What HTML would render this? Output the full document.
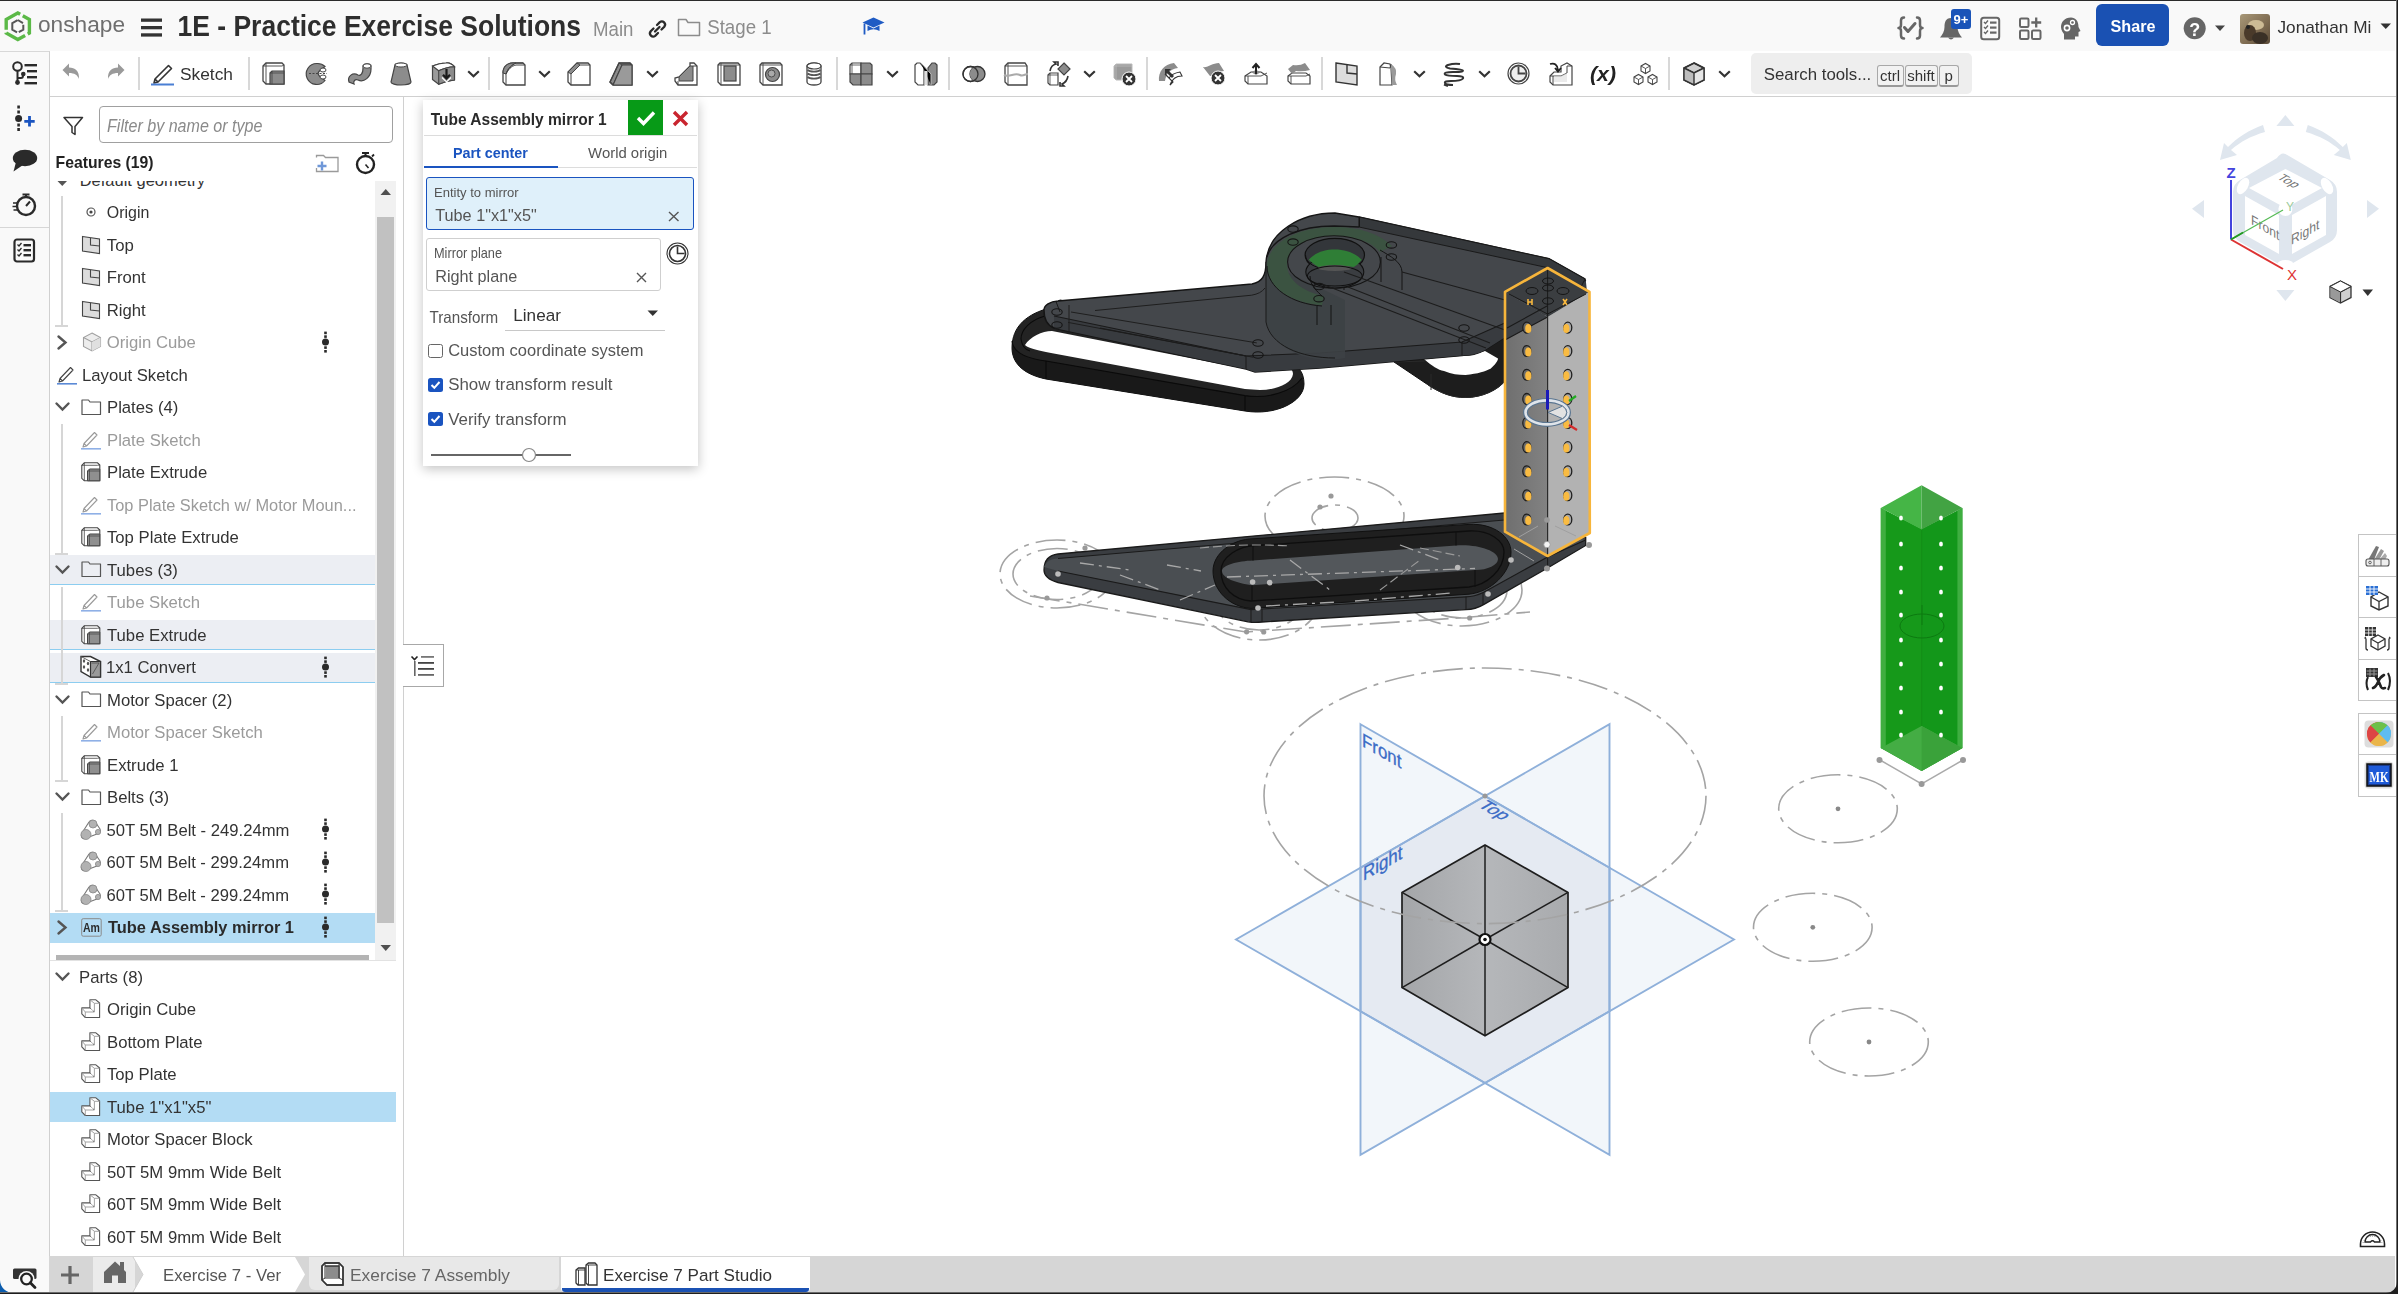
<!DOCTYPE html>
<html><head><meta charset="utf-8"><style>
*{margin:0;padding:0;box-sizing:border-box}
html,body{width:2398px;height:1294px;overflow:hidden;background:#fff;font-family:"Liberation Sans",sans-serif;color:#333}
.a{position:absolute}
.t{position:absolute;white-space:nowrap;line-height:1}
svg{position:absolute;overflow:visible}
#frameTop{left:0;top:0;width:2398px;height:1px;background:#2b2b2b}
#frameR{left:2396px;top:0;width:2px;height:1294px;background:linear-gradient(90deg,#707070 0,#707070 1px,#1e1e1e 1px)}
#frameB{left:0;top:1292px;width:2398px;height:2px;background:linear-gradient(180deg,#6a6a6a 0,#6a6a6a 1px,#1e1e1e 1px)}
#topbar{left:0;top:1px;width:2395px;height:50px;background:#f9f9f9}
#rail{left:0;top:51px;width:50px;height:1241px;background:#f9f9f9;border-right:1px solid #cfcfcf;border-top:1px solid #d8d8d8}
#toolbar{left:49px;top:51px;width:2346px;height:46px;background:#fff;border-bottom:1px solid #cfcfcf}
.sep{position:absolute;top:58px;width:2px;height:32px;background:#d6d6d6}
#fpanel{left:49px;top:96px;width:355px;height:1160px;background:#fff;border-right:1px solid #cfcfcf;border-top:1px solid #cfcfcf}
.lbl{position:absolute;font-size:16.5px;color:#333;white-space:nowrap;line-height:1}
.dim{color:#9b9b9b}
#bottombar{left:49px;top:1256px;width:2346px;height:36px;background:#d6d6d6}

</style></head><body>
<div class="a" style="left:0px;top:1px;width:2395px;height:50px;background:#f9f9f9"></div>
<div class="a" style="left:50px;top:51px;width:2346px;height:46px;background:#fff;border-bottom:1px solid #d0d0d0"></div>
<div class="a" style="left:0px;top:51px;width:50px;height:1241px;background:#f9f9f9;border-right:1px solid #d0d0d0;border-top:1px solid #d8d8d8"></div>
<div class="a" style="left:0px;top:227px;width:49px;height:1px;background:#d6d6d6"></div>
<svg style="left:0px;top:10px" width="36" height="34" viewBox="0 0 36 34">
<path d="M6.2 19.5 L17.8 13 L29.4 19.5 L29.4 33 L17.8 39.5 L6.2 33 Z" fill="none" stroke="#5bb947" stroke-width="3.4" stroke-dasharray="16 3 23 3 22 3 10 0" stroke-linejoin="miter" transform="translate(0,-10)"/>
<path d="M17.8 20 L23.3 23.2 L23.3 29.6 L17.8 32.8 L12.3 29.6 L12.3 23.2 Z" fill="none" stroke="#565656" stroke-width="2" stroke-dasharray="6 2 10 2 12 0" transform="translate(0,-10)"/>
</svg>
<svg style="left:141px;top:18px" width="22" height="20" viewBox="0 0 22 20"><rect x="0" y="0.5" width="21" height="3.3" fill="#333"/><rect x="0" y="8" width="21" height="3.3" fill="#333"/><rect x="0" y="15.3" width="21" height="3.3" fill="#333"/></svg>
<svg style="left:647px;top:19px" width="21" height="20" viewBox="0 0 21 20"><g fill="none" stroke="#2a2a2a" stroke-width="2.3" stroke-linecap="round"><path d="M8 12.5 L12.5 8"/><path d="M10 6 L12.8 3.2 a3.2 3.2 0 0 1 4.5 4.5 L14.5 10.5"/><path d="M6.5 9.5 L3.7 12.3 a3.2 3.2 0 0 0 4.5 4.5 L11 14"/></g></svg>
<svg style="left:677px;top:18px" width="25" height="20" viewBox="0 0 25 20"><path d="M1.5 1.5 L9 1.5 L11 4.5 L22.5 4.5 L22.5 17.5 L1.5 17.5 Z" fill="none" stroke="#8c8c8c" stroke-width="1.5" stroke-linejoin="round"/></svg>
<svg style="left:862px;top:16px" width="23" height="21" viewBox="0 0 23 21"><path d="M0.5 6.5 L11.5 1.5 L22.5 6.5 L11.5 11.5 Z" fill="#1f5bc4"/><path d="M5.5 9.5 L5.5 15 Q11.5 11.5 17.5 15 L17.5 9.5 L11.5 12.5 Z" fill="#1f5bc4"/><path d="M2.5 7.5 L2.5 18.5" stroke="#1f5bc4" stroke-width="1.8"/></svg>
<svg style="left:1897px;top:16px" width="27" height="25" viewBox="0 0 27 25"><g fill="none" stroke="#666" stroke-width="2.5" stroke-linecap="round" stroke-linejoin="round"><path d="M7 1.5 Q4 1.5 4 4.5 L4 9 Q4 12 1.5 12 Q4 12 4 15 L4 19.5 Q4 22.5 7 22.5"/><path d="M20 1.5 Q23 1.5 23 4.5 L23 9 Q23 12 25.5 12 Q23 12 23 15 L23 19.5 Q23 22.5 20 22.5"/><path d="M7.5 11.5 L11 15.5 L18 7.5" stroke-width="3"/></g></svg>
<svg style="left:1939px;top:16px" width="24" height="25" viewBox="0 0 24 25"><path d="M12 2 C6.5 2 5.5 6.5 5.5 11 C5.5 15.5 3.5 18.5 1 21.5 L23 21.5 C20.5 18.5 18.5 15.5 18.5 11 C18.5 6.5 17.5 2 12 2 Z" fill="#666"/><path d="M9 21.5 Q12 25.5 15 21.5 Z" fill="#666"/></svg>
<div class="a" style="left:1951px;top:9px;width:20px;height:20px;background:#1a54b8;border-radius:3px"></div>
<svg style="left:1980px;top:16px" width="22" height="25" viewBox="0 0 22 25"><rect x="1.2" y="1.8" width="18" height="21.5" rx="2.5" fill="none" stroke="#666" stroke-width="2"/><g fill="none" stroke="#666" stroke-width="1.4"><path d="M4 6 L5.5 7.5 L8 4.5"/><path d="M4 11 L5.5 12.5 L8 9.5"/><path d="M4 16 L5.5 17.5 L8 14.5"/></g><g fill="#666"><rect x="10" y="5.5" width="6.5" height="2.2"/><rect x="10" y="10.5" width="6.5" height="2.2"/><rect x="10" y="15.5" width="6.5" height="2.2"/></g></svg>
<svg style="left:2018px;top:16px" width="26" height="25" viewBox="0 0 26 25"><g fill="none" stroke="#666" stroke-width="2"><rect x="2" y="2.5" width="8.5" height="8.5" rx="1.2"/><rect x="2" y="14.5" width="8.5" height="8.5" rx="1.2"/><rect x="14" y="14.5" width="8.5" height="8.5" rx="1.2"/><path d="M18.2 1.5 L18.2 11.5 M13.3 6.5 L23.2 6.5" stroke-width="2.3"/></g></svg>
<svg style="left:2060px;top:16px" width="22" height="25" viewBox="0 0 22 25"><path d="M11 1.5 C4.5 1.5 1 6 1 11 C1 14.5 3 16.5 4 18 L4 23.5 L15 23.5 L15 20.5 L18.5 20.5 L18.5 16 L20.5 15 L18.5 11 C18.5 5 15.5 1.5 11 1.5 Z" fill="#666"/><circle cx="7" cy="12" r="2.6" fill="none" stroke="#fff" stroke-width="1.6"/><circle cx="12.5" cy="6.5" r="2" fill="none" stroke="#fff" stroke-width="1.3"/></svg>
<div class="a" style="left:2096px;top:4px;width:73px;height:42px;background:#1a51b3;border-radius:6px"></div>
<svg style="left:2183px;top:17px" width="44" height="23" viewBox="0 0 44 23"><circle cx="11.7" cy="11.3" r="11" fill="#666"/><path d="M32 8.5 L42 8.5 L37 14 Z" fill="#444"/></svg>
<svg style="left:2240px;top:14px" width="30" height="30" viewBox="0 0 30 30"><defs><linearGradient id="avg" x1="0" y1="0" x2="1" y2="1"><stop offset="0" stop-color="#a89878"/><stop offset="0.6" stop-color="#7d6a50"/><stop offset="1" stop-color="#5a4a38"/></linearGradient></defs>
<rect x="0" y="0" width="30" height="30" rx="3" fill="url(#avg)"/><ellipse cx="16" cy="11" rx="8" ry="5" fill="#cdbb95"/><ellipse cx="10" cy="19" rx="6" ry="8" fill="#4a3a2a"/><circle cx="8" cy="13" r="2" fill="#222"/><ellipse cx="20" cy="24" rx="8" ry="6" fill="#3a3026"/></svg>
<svg style="left:2380px;top:23px" width="12" height="7" viewBox="0 0 12 7"><path d="M0.5 0.5 L11 0.5 L5.75 6 Z" fill="#333"/></svg>
<svg style="left:62px;top:63px" width="18" height="20" viewBox="0 0 18 20"><path d="M0.5 7 L7 0.5 L7 4.5 C13 4.5 17.5 8 17 16 C15.5 12 12.5 10 7 10 L7 13.5 Z" fill="#9a9a9a"/></svg>
<svg style="left:107px;top:63px" width="18" height="20" viewBox="0 0 18 20"><path d="M17.5 7 L11 0.5 L11 4.5 C5 4.5 0.5 8 1 16 C2.5 12 5.5 10 11 10 L11 13.5 Z" fill="#9a9a9a"/></svg>
<div class="a" style="left:138px;top:57px;width:2px;height:33px;background:#d8d8d8"></div>
<svg style="left:150px;top:62px" width="25" height="24" viewBox="0 0 25 24"><path d="M5 17 L18.5 3.5 L21.5 6.5 L8 20 L4 21 Z M5 17 L8 20" fill="none" stroke="#333" stroke-width="1.6" stroke-linejoin="round"/><rect x="1" y="21.5" width="23" height="2" fill="#4a7fd4"/></svg>
<div class="a" style="left:248px;top:57px;width:2px;height:33px;background:#d8d8d8"></div>
<svg style="left:262px;top:62px" width="24" height="24" viewBox="0 0 24 24"><path d="M1 4 L4 1 L20 1 L22 3 L22 22 L4 22 L1 19 Z" fill="#fff" stroke="#444" stroke-width="1.3"/><path d="M4 1 L4 22 M1 4 L20 4 L22 3" fill="none" stroke="#444" stroke-width="0.9"/><path d="M8 11 L10 9 L22 9 L22 22 L8 22 Z" fill="#8c8c8c" stroke="#444" stroke-width="1.2"/><path d="M10 9 L10 22 M8 11 L22 11" stroke="#444" stroke-width="0.8"/></svg>
<svg style="left:305px;top:62px" width="24" height="24" viewBox="0 0 24 24"><path d="M12 1.5 A10.5 10.5 0 1 0 20 18.5 L14 13.5 A3 3 0 0 1 14 9.5 L20 4.5 A10.5 10.5 0 0 0 12 1.5 Z" fill="#8c8c8c" stroke="#444" stroke-width="1.2"/><ellipse cx="18" cy="8" rx="3" ry="2" fill="#fff" stroke="#444" stroke-width="1"/><ellipse cx="18" cy="15" rx="3" ry="2" fill="#fff" stroke="#444" stroke-width="1"/><path d="M4 11.5 L22 11.5" stroke="#444" stroke-width="1" stroke-dasharray="2 1.5"/></svg>
<svg style="left:347px;top:62px" width="25" height="24" viewBox="0 0 25 24"><path d="M2 20 C0 14 6 10 11 13 C14 14.5 16 11 16 6 L16 4 A4 2.2 0 0 1 24 4 L24 7 C24 15 17 21 11 18 C8 17 6 19 7 22 Z" fill="#8c8c8c" stroke="#444" stroke-width="1.2"/><ellipse cx="20" cy="4" rx="4" ry="2.2" fill="#fff" stroke="#444" stroke-width="1"/></svg>
<svg style="left:389px;top:62px" width="24" height="24" viewBox="0 0 24 24"><path d="M6 3 A6 2 0 0 1 18 3 L22 20 A10 3 0 0 1 2 20 Z" fill="#8c8c8c" stroke="#444" stroke-width="1.2"/><ellipse cx="12" cy="3" rx="6" ry="2" fill="#fff" stroke="#444" stroke-width="1"/></svg>
<svg style="left:432px;top:62px" width="24" height="24" viewBox="0 0 24 24"><path d="M0.5 4 Q8 1 14 1 Q18 0 22.5 4.7 L22.5 18 Q14 19 6.7 22.2 L0.5 17.5 Z" fill="#9a9a9a" stroke="#444" stroke-width="1.2" stroke-linejoin="round"/><path d="M0.5 4 L6.7 8.8 Q14 5 22.5 4.7 Q18 0 14 1 Q8 1 0.5 4 Z" fill="#fff" stroke="#444" stroke-width="1.1"/><path d="M6.7 8.8 Q14 5 22.5 4.7 L22.5 18 Q14 19 6.7 22.2 Z" fill="#8c8c8c" stroke="#444" stroke-width="1.1"/><path d="M10 15.5 L14.5 20 L19 15.5" fill="none" stroke="#fff" stroke-width="1.2"/><path d="M14.5 7 L14.5 16 M11 12.8 L14.5 16.5 L18 12.8" fill="none" stroke="#1a1a1a" stroke-width="2.2"/></svg>
<svg style="left:467px;top:70px" width="13" height="8" viewBox="0 0 13 8"><path d="M1.2 1.2 L6.5 6.2 L11.8 1.2" fill="none" stroke="#333" stroke-width="2.2"/></svg>
<div class="a" style="left:488px;top:57px;width:2px;height:33px;background:#d8d8d8"></div>
<svg style="left:502px;top:62px" width="24" height="24" viewBox="0 0 24 24"><path d="M1 20 L1 11 C1 5 5 1 11 1 L21 1 L23 3 L23 23 L4 23 Z" fill="#fff" stroke="#444" stroke-width="1.3"/><path d="M1 11 C1 5 5 1 11 1 L14 1 C10 3 6 6 4 12 Z" fill="#8c8c8c" stroke="#444" stroke-width="1"/><path d="M4 12 L4 23 M4 12 C6 6 10 3 14 1 L21 1 L23 3 L14 3 C9 4 6 8 4 12" fill="none" stroke="#444" stroke-width="1"/></svg>
<svg style="left:538px;top:70px" width="13" height="8" viewBox="0 0 13 8"><path d="M1.2 1.2 L6.5 6.2 L11.8 1.2" fill="none" stroke="#333" stroke-width="2.2"/></svg>
<svg style="left:567px;top:62px" width="24" height="24" viewBox="0 0 24 24"><path d="M1 20 L1 10 L10 1 L21 1 L23 3 L23 23 L4 23 Z" fill="#fff" stroke="#444" stroke-width="1.3"/><path d="M1 10 L10 1 L13 3 L4 12 Z" fill="#8c8c8c" stroke="#444" stroke-width="1"/><path d="M4 12 L4 23 M13 3 L23 3" fill="none" stroke="#444" stroke-width="1"/></svg>
<svg style="left:609px;top:62px" width="24" height="24" viewBox="0 0 24 24"><path d="M1 20 L10 1 L21 1 L23 3 L23 23 L4 23 Z" fill="#8c8c8c" stroke="#444" stroke-width="1.3"/><path d="M10 1 L13 3 L23 3 M13 3 L4 23" fill="none" stroke="#444" stroke-width="1"/><path d="M13 3 L23 3 L23 23 L4 23 Z" fill="#9a9a9a"/><path d="M1 20 L10 1 L21 1 L23 3 L23 23 L4 23 Z M13 3 L4 23 M13 3 L23 3" fill="none" stroke="#444" stroke-width="1.2"/></svg>
<svg style="left:646px;top:70px" width="13" height="8" viewBox="0 0 13 8"><path d="M1.2 1.2 L6.5 6.2 L11.8 1.2" fill="none" stroke="#333" stroke-width="2.2"/></svg>
<svg style="left:674px;top:62px" width="24" height="24" viewBox="0 0 24 24"><path d="M1 16 L1 19 L4 23 L23 23 L23 4 L20 1 L16 1 L16 4 L5 15 Z" fill="#fff" stroke="#444" stroke-width="1.3"/><path d="M5 15 L16 4 L19 4 L19 19 L5 19 Z" fill="#8c8c8c" stroke="#444" stroke-width="1"/><path d="M4 19 L4 23 M19 4 L23 4" stroke="#444" stroke-width="1"/></svg>
<svg style="left:717px;top:62px" width="24" height="24" viewBox="0 0 24 24"><path d="M1 3 L3 1 L21 1 L23 3 L23 23 L4 23 L1 20 Z" fill="#fff" stroke="#444" stroke-width="1.3"/><rect x="7" y="4" width="12" height="15" fill="#8c8c8c" stroke="#444" stroke-width="1.2"/><path d="M4 1 L4 23 M1 3 L23 3" fill="none" stroke="#444" stroke-width="0.9"/></svg>
<svg style="left:759px;top:62px" width="24" height="24" viewBox="0 0 24 24"><path d="M1 3 L3 1 L21 1 L23 3 L23 23 L4 23 L1 20 Z" fill="#fff" stroke="#444" stroke-width="1.3"/><circle cx="13.5" cy="12.5" r="7" fill="#8c8c8c" stroke="#444" stroke-width="1.2"/><circle cx="12.5" cy="11.5" r="3.5" fill="#aaa" stroke="#444" stroke-width="0.9"/><path d="M4 1 L4 23 M1 3 L23 3" fill="none" stroke="#444" stroke-width="0.9"/></svg>
<svg style="left:806px;top:62px" width="16" height="24" viewBox="0 0 16 24"><path d="M1 4 A7 3 0 0 1 15 4 L15 20 A7 3 0 0 1 1 20 Z" fill="#fff" stroke="#444" stroke-width="1.3"/><g fill="none" stroke="#555" stroke-width="1.8"><path d="M1.5 8 A7 2.5 0 0 0 14.5 8"/><path d="M1.5 11.5 A7 2.5 0 0 0 14.5 11.5"/><path d="M1.5 15 A7 2.5 0 0 0 14.5 15"/></g><ellipse cx="8" cy="4" rx="7" ry="3" fill="#fff" stroke="#444" stroke-width="1.2"/></svg>
<div class="a" style="left:836px;top:57px;width:2px;height:33px;background:#d8d8d8"></div>
<svg style="left:849px;top:62px" width="24" height="24" viewBox="0 0 24 24"><g stroke="#444" stroke-width="1.2"><path d="M1 3 L3 1 L12 1 L12 12 L1 12 Z" fill="#fff"/><path d="M12 1 L21 1 L23 3 L23 12 L12 12 Z" fill="#8c8c8c"/><path d="M1 12 L12 12 L12 23 L4 23 L1 20 Z" fill="#8c8c8c"/><path d="M12 12 L23 12 L23 23 L12 23 Z" fill="#8c8c8c"/></g><path d="M3 1 L3 12 M1 3 L12 3" stroke="#444" stroke-width="0.8"/></svg>
<svg style="left:886px;top:70px" width="13" height="8" viewBox="0 0 13 8"><path d="M1.2 1.2 L6.5 6.2 L11.8 1.2" fill="none" stroke="#333" stroke-width="2.2"/></svg>
<svg style="left:914px;top:62px" width="24" height="24" viewBox="0 0 24 24"><path d="M1 3 L3 1 L6 1 L10 6 L10 23 L4 23 L1 20 Z" fill="#fff" stroke="#444" stroke-width="1.2"/><path d="M23 3 L21 1 L18 1 L14 6 L14 23 L20 23 L23 20 Z" fill="#8c8c8c" stroke="#444" stroke-width="1.2"/><path d="M7 1 L17 12 L17 23" stroke="#bbb" stroke-width="1"/><rect x="10.5" y="9" width="3" height="14" fill="#ddd"/></svg>
<div class="a" style="left:948px;top:57px;width:2px;height:33px;background:#d8d8d8"></div>
<svg style="left:962px;top:62px" width="24" height="24" viewBox="0 0 24 24"><circle cx="8.5" cy="12" r="7.5" fill="#fff" stroke="#333" stroke-width="1.3"/><circle cx="15.5" cy="12" r="7.5" fill="#8c8c8c" stroke="#333" stroke-width="1.3"/><path d="M12 5.3 A7.5 7.5 0 0 1 12 18.7 A7.5 7.5 0 0 1 12 5.3 Z" fill="#8c8c8c"/><circle cx="8.5" cy="12" r="7.5" fill="none" stroke="#333" stroke-width="1.3"/></svg>
<svg style="left:1004px;top:62px" width="24" height="24" viewBox="0 0 24 24"><path d="M1 4 L4 1 L21 1 L23 4 L23 23 L4 23 L1 20 Z" fill="#fff" stroke="#444" stroke-width="1.3"/><path d="M4 1 L4 23 M1 4 L23 4" stroke="#444" stroke-width="0.9"/><path d="M0 13 C6 16 10 10 16 13 C19 14.5 21 12 24 12" fill="none" stroke="#aaa" stroke-width="2"/></svg>
<svg style="left:1047px;top:62px" width="24" height="24" viewBox="0 0 24 24"><path d="M1 13 L3 11 L11 11 L11 23 L3 23 L1 21 Z" fill="#fff" stroke="#444" stroke-width="1.2"/><path d="M3 11 L3 23 M1 13 L11 13" stroke="#444" stroke-width="0.8"/><path d="M17 1 L23 7 L17 13 L11 7 Z" fill="#8c8c8c" stroke="#444" stroke-width="1.2"/><path d="M3 9 Q4 3 9 2 L7 0 L11 0 L11 4" fill="none" stroke="#333" stroke-width="1.6"/><path d="M21 14 Q20 20 15 22 L17 24 L13 24 L13 20" fill="none" stroke="#333" stroke-width="1.6"/></svg>
<svg style="left:1083px;top:70px" width="13" height="8" viewBox="0 0 13 8"><path d="M1.2 1.2 L6.5 6.2 L11.8 1.2" fill="none" stroke="#333" stroke-width="2.2"/></svg>
<svg style="left:1113px;top:63px" width="23" height="24" viewBox="0 0 23 24"><path d="M1 3 L3 1 L19 1 L19 17 L3 17 L1 15 Z" fill="#9a9a9a" stroke="#bbb" stroke-width="1"/><path d="M3 1 L3 17 M1 3 L19 3" stroke="#bbb" stroke-width="0.8"/><circle cx="16" cy="16" r="7" fill="#333" stroke="#fff" stroke-width="1"/><path d="M13 13 L19 19 M19 13 L13 19" stroke="#fff" stroke-width="1.8"/></svg>
<div class="a" style="left:1146px;top:57px;width:2px;height:33px;background:#d8d8d8"></div>
<svg style="left:1158px;top:62px" width="25" height="24" viewBox="0 0 25 24"><path d="M1 19 C0 10 6 2 16 1 L20 6 C12 7 8 12 7 19 Z" fill="#8c8c8c"/><path d="M7 12 L15 20 L12 23 C14 17 18 14 24 14 L22 10 C16 11 13 13 11 16 L8 13" fill="#fff" stroke="#333" stroke-width="1.1"/><path d="M7 7 L7 14 L14 14" fill="none" stroke="#222" stroke-width="0"/><path d="M7 7 L13 7 L11 9 L16 14 L14 16 L9 11 L7 13 Z" fill="#333"/></svg>
<svg style="left:1202px;top:62px" width="24" height="24" viewBox="0 0 24 24"><path d="M1 5 C6 6 10 1 17 1 L22 9 C17 9 13 14 8 14 Z" fill="#8c8c8c"/><circle cx="16" cy="16" r="7" fill="#333" stroke="#fff" stroke-width="1"/><path d="M13 13 L19 19 M19 13 L13 19" stroke="#fff" stroke-width="1.8"/></svg>
<svg style="left:1244px;top:62px" width="24" height="24" viewBox="0 0 24 24"><path d="M1 14 L7 10 L17 10 L23 14 L23 22 L4 22 L1 19 Z" fill="#fff" stroke="#444" stroke-width="1.2"/><path d="M1 14 L17 14 L23 11 M4 14 L4 22" fill="none" stroke="#444" stroke-width="0.9"/><path d="M7 10 L12 8 L17 10 L12 13 Z" fill="#8c8c8c"/><path d="M12 12 L12 3 M8.5 6 L12 2 L15.5 6" fill="none" stroke="#222" stroke-width="2"/></svg>
<svg style="left:1287px;top:62px" width="24" height="24" viewBox="0 0 24 24"><path d="M1 14 L5 11 L19 11 L23 14 L23 22 L4 22 L1 19 Z" fill="#fff" stroke="#444" stroke-width="1.2"/><path d="M1 14 L19 14 L23 12 M4 14 L4 22" fill="none" stroke="#444" stroke-width="0.9"/><path d="M1 7 L6 3 Q13 4 18 1 L23 8 Q16 10 9 9 L5 12 Z" fill="#8c8c8c"/></svg>
<div class="a" style="left:1321px;top:57px;width:2px;height:33px;background:#d8d8d8"></div>
<svg style="left:1335px;top:62px" width="24" height="24" viewBox="0 0 24 24"><path d="M1 1 L22 4 L22 23 L1 20 Z" fill="#ddd" stroke="#333" stroke-width="1.4"/><path d="M12 2.5 L12 11 L22 12" fill="none" stroke="#333" stroke-width="1.4"/></svg>
<svg style="left:1379px;top:62px" width="20" height="24" viewBox="0 0 20 24"><path d="M1 5 L5 1 L11 2 L12 6 L13 23 L1 23 Z" fill="#fff" stroke="#444" stroke-width="1.2"/><path d="M12 2 Q18 6 17 12 Q15 18 18 23 L13 23 L12 6 Z" fill="#9a9a9a"/><path d="M1 5 L11 6 L12 2" fill="none" stroke="#444" stroke-width="1"/></svg>
<svg style="left:1413px;top:70px" width="13" height="8" viewBox="0 0 13 8"><path d="M1.2 1.2 L6.5 6.2 L11.8 1.2" fill="none" stroke="#333" stroke-width="2.2"/></svg>
<svg style="left:1443px;top:62px" width="22" height="25" viewBox="0 0 22 25"><g fill="none" stroke="#333" stroke-width="2"><path d="M17 2 Q11 1 5 3 Q0 5 7 6.5 Q20 7.5 20 8.5 Q20 10.5 10 10 Q0 10 2 12.5 Q4 14 14 14 Q21 14 20 16.5 Q18 19 8 19 Q1 19 2 21 Q3 23 10 23"/><path d="M5 24 L1 22.5"/></g></svg>
<svg style="left:1478px;top:70px" width="13" height="8" viewBox="0 0 13 8"><path d="M1.2 1.2 L6.5 6.2 L11.8 1.2" fill="none" stroke="#333" stroke-width="2.2"/></svg>
<svg style="left:1507px;top:62px" width="24" height="24" viewBox="0 0 24 24"><circle cx="11.5" cy="11.5" r="10.5" fill="#fff" stroke="#444" stroke-width="1.2"/><circle cx="11.5" cy="11.5" r="8" fill="#eee" stroke="#444" stroke-width="1.8"/><path d="M11.5 4.5 L11.5 11.5 L18.5 11.5" fill="none" stroke="#444" stroke-width="1.8"/></svg>
<svg style="left:1549px;top:62px" width="24" height="24" viewBox="0 0 24 24"><path d="M1 14 L5 10 L12 10 L12 4 L18 1 L23 4 L23 23 L4 23 L1 20 Z" fill="#fff" stroke="#444" stroke-width="1.2"/><path d="M4 14 L4 23 M1 14 L12 14 L18 11 L18 4 L23 4" fill="none" stroke="#444" stroke-width="1"/><path d="M1 2 Q8 0 9 8 M6 6 L9 9.5 L12 6" fill="none" stroke="#222" stroke-width="1.8"/><path d="M5 14 L12 14 L18 11 L18 20 L5 20 Z" fill="#ddd" opacity="0.6"/></svg>
<svg style="left:1633px;top:62px" width="25" height="24" viewBox="0 0 25 24"><g fill="#fff" stroke="#444" stroke-width="1.1"><path d="M8 4 L12.5 1.5 L17 4 L17 9 L12.5 11.5 L8 9 Z"/><path d="M1 15 L5.5 12.5 L10 15 L10 20 L5.5 22.5 L1 20 Z"/><path d="M15 15 L19.5 12.5 L24 15 L24 20 L19.5 22.5 L15 20 Z"/></g><g fill="none" stroke="#444" stroke-width="0.9"><path d="M8 4 L12.5 6.5 L17 4 M12.5 6.5 L12.5 11.5"/><path d="M1 15 L5.5 17.5 L10 15 M5.5 17.5 L5.5 22.5"/><path d="M15 15 L19.5 17.5 L24 15 M19.5 17.5 L19.5 22.5"/></g></svg>
<div class="a" style="left:1668px;top:57px;width:2px;height:33px;background:#d8d8d8"></div>
<svg style="left:1683px;top:62px" width="22" height="24" viewBox="0 0 22 24"><path d="M11 1 L21 6 L21 18 L11 23 L1 18 L1 6 Z" fill="#cfcfcf" stroke="#333" stroke-width="1.4"/><path d="M1 6 L11 11 L21 6 M11 11 L11 23" fill="none" stroke="#333" stroke-width="1.4"/><path d="M11 11 L21 6 L21 18 L11 23 Z" fill="#e6e6e6"/><path d="M1 6 L11 11 L11 23 L1 18 Z" fill="#bdbdbd"/><path d="M11 1 L21 6 L21 18 L11 23 L1 18 L1 6 Z M1 6 L11 11 L21 6 M11 11 L11 23" fill="none" stroke="#333" stroke-width="1.4"/></svg>
<svg style="left:1718px;top:70px" width="13" height="8" viewBox="0 0 13 8"><path d="M1.2 1.2 L6.5 6.2 L11.8 1.2" fill="none" stroke="#333" stroke-width="2.2"/></svg>
<div class="a" style="left:1751px;top:53px;width:221px;height:41px;background:#eeeeee;border-radius:5px"></div>
<div class="a" style="left:1876.5px;top:64.5px;width:27px;height:22px;background:#f2f2f2;border:1px solid #a8a8a8;border-bottom:2px solid #999;border-radius:3px"></div>
<div class="a" style="left:1904.5px;top:64.5px;width:33px;height:22px;background:#f2f2f2;border:1px solid #a8a8a8;border-bottom:2px solid #999;border-radius:3px"></div>
<div class="a" style="left:1938.5px;top:64.5px;width:20.5px;height:22px;background:#f2f2f2;border:1px solid #a8a8a8;border-bottom:2px solid #999;border-radius:3px"></div>
<div class="a" style="left:49px;top:1256px;width:2346px;height:36px;background:#d6d6d6"></div>
<div class="a" style="left:93px;top:1257px;width:42px;height:35px;background:#ebebeb"></div>
<svg style="left:133px;top:1257px" width="180" height="35" viewBox="0 0 180 35"><path d="M0 0 L162 0 L172 17.5 L162 35 L0 35 L10 17.5 Z" fill="#fff"/><path d="M0 0 L10 17.5 L0 35" fill="none" stroke="#cfcfcf" stroke-width="1"/></svg>
<div class="a" style="left:309px;top:1257px;width:250px;height:33px;background:#e8e8e8;border-radius:0 0 6px 6px"></div>
<div class="a" style="left:561px;top:1257px;width:249px;height:35px;background:#fff;border-radius:0 0 4px 4px"></div>
<div class="a" style="left:562px;top:1288px;width:247px;height:4px;background:#1a51b3;border-radius:0 0 3px 3px"></div>
<svg style="left:12px;top:1267px" width="26" height="22" viewBox="0 0 26 22"><rect x="1" y="1.5" width="23.5" height="10.5" rx="1.5" fill="#333"/><circle cx="14.5" cy="12" r="8" fill="#f9f9f9"/><circle cx="14.5" cy="12" r="5.3" fill="#f9f9f9" stroke="#222" stroke-width="2.3"/><path d="M18.3 15.8 L23 20.5" stroke="#222" stroke-width="2.8" stroke-linecap="round"/></svg>
<svg style="left:60px;top:1265px" width="20" height="20" viewBox="0 0 20 20"><path d="M10 1 L10 19 M1 10 L19 10" stroke="#666" stroke-width="3.2"/></svg>
<svg style="left:103px;top:1260px" width="24" height="24" viewBox="0 0 24 24"><path d="M1 12 L12 1.5 L17 6 L17 2 L21 2 L21 10 L23 12 L23 23 L15 23 L15 15.5 L9 15.5 L9 23 L1 23 Z" fill="#666"/></svg>
<svg style="left:321px;top:1262px" width="25" height="25" viewBox="0 0 25 25"><path d="M1 4 L4 1 L18 1 L22 5 L22 23 L6 23 L1 18 Z" fill="#fff" stroke="#333" stroke-width="1.4"/><path d="M4 1 L4 16 L18 16 L18 1 M4 16 L1 18 M18 16 L22 18" fill="none" stroke="#333" stroke-width="1"/><rect x="4.5" y="4" width="13" height="12" fill="#8c8c8c"/><path d="M1 4 L4 1 L18 1 L22 5 L22 23 L6 23 L1 18 Z M4 4 L18 4 L18 16" fill="none" stroke="#333" stroke-width="1.3"/></svg>
<svg style="left:575px;top:1262px" width="24" height="24" viewBox="0 0 24 24"><path d="M1 8 L3.5 6 L10 6 L10 23 L3 23 L1 21 Z" fill="#fff" stroke="#333" stroke-width="1.3"/><path d="M11 3 L13.5 1 L20 1 L22 3 L22 23 L13 23 L11 21 Z" fill="#fff" stroke="#333" stroke-width="1.3"/><path d="M3.5 8 L3.5 23 M13.5 3 L13.5 23 M11 3 L22 3 M1 8 L10 8" stroke="#333" stroke-width="0.9"/></svg>
<svg style="left:0;top:0" width="2398" height="1294" viewBox="0 0 2398 1294"><defs><clipPath id="cpF"><polygon points="1360.5,724.2 1609.5,867.8 1609.5,1154.8 1360.5,1011.2"/></clipPath><clipPath id="cpR"><polygon points="1360.5,867.8 1609.5,724.2 1609.5,1011.2 1360.5,1154.8"/></clipPath></defs>
<polygon points="1360.5,724.2 1609.5,867.8 1609.5,1154.8 1360.5,1011.2" fill="#f2f6fa"/>
<polygon points="1360.5,867.8 1609.5,724.2 1609.5,1011.2 1360.5,1154.8" fill="#f2f6fa"/>
<polygon points="1734.0,939.5 1485.0,1083.0 1236.0,939.5 1485.0,796.0" fill="#f2f6fa"/>
<polygon points="1734.0,939.5 1485.0,1083.0 1236.0,939.5 1485.0,796.0" fill="#e5eaf2" clip-path="url(#cpF)"/>
<polygon points="1734.0,939.5 1485.0,1083.0 1236.0,939.5 1485.0,796.0" fill="#e5eaf2" clip-path="url(#cpR)"/>
<polygon points="1360.5,867.8 1609.5,724.2 1609.5,1011.2 1360.5,1154.8" fill="#e5eaf2" clip-path="url(#cpF)"/>
<polygon points="1360.5,724.2 1609.5,867.8 1609.5,1154.8 1360.5,1011.2" fill="none" stroke="#8fb0da" stroke-width="1.9"/>
<polygon points="1360.5,867.8 1609.5,724.2 1609.5,1011.2 1360.5,1154.8" fill="none" stroke="#8fb0da" stroke-width="1.9"/>
<polygon points="1734.0,939.5 1485.0,1083.0 1236.0,939.5 1485.0,796.0" fill="none" stroke="#8fb0da" stroke-width="1.9"/>
<defs><linearGradient id="cg" x1="0" y1="0" x2="1" y2="0"><stop offset="0" stop-color="#a4a6a9"/><stop offset="0.5" stop-color="#b5b7ba"/><stop offset="1" stop-color="#a9abae"/></linearGradient></defs>
<polygon points="1485.0,845.0 1568.0,892.4 1568.0,987.6 1485.0,1035.8 1402.0,987.6 1402.0,892.4" fill="url(#cg)" stroke="#1e1e1e" stroke-width="1.7"/>
<line x1="1485.0" y1="939.5" x2="1485" y2="845" stroke="#1e1e1e" stroke-width="1.5"/>
<line x1="1485.0" y1="939.5" x2="1568" y2="892.4" stroke="#1e1e1e" stroke-width="1.5"/>
<line x1="1485.0" y1="939.5" x2="1568" y2="987.6" stroke="#1e1e1e" stroke-width="1.5"/>
<line x1="1485.0" y1="939.5" x2="1485" y2="1035.8" stroke="#1e1e1e" stroke-width="1.5"/>
<line x1="1485.0" y1="939.5" x2="1402" y2="987.6" stroke="#1e1e1e" stroke-width="1.5"/>
<line x1="1485.0" y1="939.5" x2="1402" y2="892.4" stroke="#1e1e1e" stroke-width="1.5"/>
<circle cx="1485.0" cy="939.5" r="5.5" fill="#fff" stroke="#111" stroke-width="2.2"/><circle cx="1485.0" cy="939.5" r="1.8" fill="#111"/>
<text font-family="Liberation Sans" font-size="19.5" fill="#3c6cc6" stroke="#3c6cc6" stroke-width="0.35" transform="matrix(0.866,0.5,0,1,1362,746)">Front</text>
<text font-family="Liberation Sans" font-size="18" fill="#3c6cc6" stroke="#3c6cc6" stroke-width="0.35" transform="matrix(0.866,0.5,-0.866,0.5,1477,806)">Top</text>
<text font-family="Liberation Sans" font-size="19.5" fill="#3c6cc6" stroke="#3c6cc6" stroke-width="0.35" transform="matrix(0.866,-0.5,0,1,1363,881)">Right</text>
<ellipse cx="1485" cy="795.8" rx="221" ry="127.8" stroke="#a4a4a4" stroke-width="1.6" fill="none" stroke-dasharray="30 7 5 7"/>
<circle cx="1485" cy="796" r="2.5" fill="#999"/>
<ellipse cx="1838" cy="808.8" rx="59.3" ry="34" stroke="#a4a4a4" stroke-width="1.6" fill="none" stroke-dasharray="30 7 5 7"/><circle cx="1838" cy="808.8" r="2.4" fill="#888"/>
<ellipse cx="1812.8" cy="927.3" rx="59.3" ry="34" stroke="#a4a4a4" stroke-width="1.6" fill="none" stroke-dasharray="30 7 5 7"/><circle cx="1812.8" cy="927.3" r="2.4" fill="#888"/>
<ellipse cx="1869" cy="1042" rx="59.3" ry="34" stroke="#a4a4a4" stroke-width="1.6" fill="none" stroke-dasharray="30 7 5 7"/><circle cx="1869" cy="1042" r="2.4" fill="#888"/>
<polygon points="1880.8,508.0 1921.6,528.7 1921.6,771.0 1880.8,748.0" fill="#16991a"/>
<polygon points="1921.6,528.7 1962.4,508.0 1962.4,748.0 1921.6,771.0" fill="#13971a"/>
<polygon points="1880.8,508.0 1885.8,510.5 1885.8,750.5 1880.8,748.0" fill="#3fae40"/>
<polygon points="1957.4,510.5 1962.4,508.0 1962.4,748.0 1957.4,750.5" fill="#3fae40"/>
<polygon points="1880.8,508.0 1921.6,485.3 1921.6,529.5 1885.8,510.5" fill="#45b546"/>
<polygon points="1921.6,485.3 1962.4,508.0 1957.4,510.5 1921.6,529.5" fill="#42a343"/>
<polygon points="1880.8,748.0 1921.6,726.0 1962.4,748.0 1921.6,771.0" fill="#44ad44"/>
<polygon points="1921.6,726.0 1962.4,748.0 1921.6,771.0" fill="#3aa23a"/>
<line x1="1921.6" y1="529.5" x2="1921.6" y2="726" stroke="#0e8c12" stroke-width="1"/>
<ellipse cx="1901" cy="518" rx="1.9" ry="2.6" fill="#fff"/>
<ellipse cx="1941" cy="518" rx="1.9" ry="2.6" fill="#fff"/>
<ellipse cx="1901" cy="544" rx="1.9" ry="2.6" fill="#fff"/>
<ellipse cx="1941" cy="544" rx="1.9" ry="2.6" fill="#fff"/>
<ellipse cx="1901" cy="568" rx="1.9" ry="2.6" fill="#fff"/>
<ellipse cx="1941" cy="568" rx="1.9" ry="2.6" fill="#fff"/>
<ellipse cx="1901" cy="592" rx="1.9" ry="2.6" fill="#fff"/>
<ellipse cx="1941" cy="592" rx="1.9" ry="2.6" fill="#fff"/>
<ellipse cx="1901" cy="615" rx="1.9" ry="2.6" fill="#fff"/>
<ellipse cx="1941" cy="615" rx="1.9" ry="2.6" fill="#fff"/>
<ellipse cx="1901" cy="640" rx="1.9" ry="2.6" fill="#fff"/>
<ellipse cx="1941" cy="640" rx="1.9" ry="2.6" fill="#fff"/>
<ellipse cx="1901" cy="664" rx="1.9" ry="2.6" fill="#fff"/>
<ellipse cx="1941" cy="664" rx="1.9" ry="2.6" fill="#fff"/>
<ellipse cx="1901" cy="688" rx="1.9" ry="2.6" fill="#fff"/>
<ellipse cx="1941" cy="688" rx="1.9" ry="2.6" fill="#fff"/>
<ellipse cx="1901" cy="712" rx="1.9" ry="2.6" fill="#fff"/>
<ellipse cx="1941" cy="712" rx="1.9" ry="2.6" fill="#fff"/>
<ellipse cx="1901" cy="735" rx="1.9" ry="2.6" fill="#fff"/>
<ellipse cx="1941" cy="735" rx="1.9" ry="2.6" fill="#fff"/>
<ellipse cx="1922" cy="626" rx="22" ry="12" fill="none" stroke="#0c7a10" stroke-width="1"/><line x1="1922" y1="605" x2="1922" y2="625" stroke="#0c7a10" stroke-width="1"/>
<polyline points="1880.0,760.0 1921.6,784.0 1963.0,760.0" fill="none" stroke="#aaa" stroke-width="1.5"/>
<circle cx="1879.5" cy="760" r="3" fill="#999"/>
<circle cx="1921.6" cy="784" r="3" fill="#999"/>
<circle cx="1963" cy="760" r="3" fill="#999"/>
<ellipse cx="1057" cy="574" rx="57" ry="34" stroke="#a4a4a4" stroke-width="1.6" fill="none" stroke-dasharray="30 7 5 7"/>
<ellipse cx="1057" cy="574" rx="44" ry="25.5" stroke="#a4a4a4" stroke-width="1.6" fill="none" stroke-dasharray="30 7 5 7"/>
<ellipse cx="1334.5" cy="516" rx="69.5" ry="39" stroke="#a4a4a4" stroke-width="1.6" fill="none" stroke-dasharray="30 7 5 7"/>
<ellipse cx="1335" cy="518" rx="23" ry="13" stroke="#a4a4a4" stroke-width="1.6" fill="none" stroke-dasharray="30 7 5 7"/>
<ellipse cx="1259" cy="600" rx="60" ry="40" stroke="#a4a4a4" stroke-width="1.6" fill="none" stroke-dasharray="30 7 5 7"/>
<ellipse cx="1259" cy="600" rx="45" ry="30" stroke="#a4a4a4" stroke-width="1.6" fill="none" stroke-dasharray="30 7 5 7"/>
<ellipse cx="1462" cy="590" rx="60" ry="36" stroke="#a4a4a4" stroke-width="1.6" fill="none" stroke-dasharray="30 7 5 7"/>
<ellipse cx="1462" cy="590" rx="45" ry="28" stroke="#a4a4a4" stroke-width="1.6" fill="none" stroke-dasharray="30 7 5 7"/>
<path d="M1030 596 L1246 632 L1458 618 L1530 612" stroke="#a4a4a4" stroke-width="1.6" fill="none" stroke-dasharray="30 7 5 7"/>
<circle cx="1047" cy="598" r="2.6" fill="#999"/>
<circle cx="1085" cy="548" r="2.6" fill="#999"/>
<circle cx="1246.6" cy="631.8" r="2.6" fill="#999"/>
<circle cx="1263.7" cy="632" r="2.6" fill="#999"/>
<circle cx="1469.7" cy="618" r="2.6" fill="#999"/>
<circle cx="1331" cy="496" r="2.6" fill="#999"/>
<circle cx="1320" cy="507" r="2.6" fill="#999"/>
<path d="M1044 570 C1044 560 1050 555 1058 554 L1504.5 513 L1585.7 537.4 L1585.7 545.5 L1547.6 568 L1484 604.4 C1478 608 1472 609.6 1466 609.6 L1262 622 C1256 622.6 1252 622.4 1248 621.8 L1058 582.5 C1049 580 1044 576 1044 570 Z" fill="#3a3d41" stroke="#1a1a1a" stroke-width="1.3"/>
<path d="M1044 567 C1046 562 1050 559 1058 558.5 L1504.5 520 L1585.7 540 L1547.6 557 L1483.3 592.5 C1478 595 1472 596.8 1466 596.8 L1262 609 L1251 609.6 L1058 571 Z" fill="#4a4e52"/>
<path d="M1058 571 L1251 609.6 L1262 609 L1466 596.8 C1472 596.8 1478 595 1483.3 592.5 L1547.6 557 L1585.7 540" fill="none" stroke="#1a1a1a" stroke-width="1.2"/>
<path d="M1058 558.5 L1504.5 520 M1251 609.6 L1251 622 M1262 609 L1262 622 M1466 596.8 L1466 609.6 M1483 592.5 L1483 604.4 M1547.6 557 L1547.6 568" fill="none" stroke="#1a1a1a" stroke-width="1"/>
<path d="M1213 571 C1213 553 1233 539 1253 538.8 L1469 524.4 C1494 523 1511 537 1511 552 C1511 574 1490 592 1469 594.2 L1251 608.4 C1230 607 1213 591 1213 571 Z" fill="#1f1f1f" stroke="#111" stroke-width="1"/>
<path d="M1222 571 C1222 565 1238 561 1253 560.5 L1456 545.5 C1478 544 1498 551 1498 559 C1498 565 1488 570 1475 570 L1252 585.2 C1236 583 1222 578 1222 571 Z" fill="#53575b"/>
<path d="M1221 571 C1221 557 1238 546 1256 545.5 L1469 531 C1490 530 1504 541 1504 552 C1504 570 1487 585 1469 587 L1251 601 C1234 600 1221 588 1221 571 Z" fill="none" stroke="#0e0e0e" stroke-width="1.3"/>
<path d="M1253 560.5 L1253 546 M1456 545.5 L1456 532 M1252 585.2 L1252 601 M1475 570 L1475 587" stroke="#0e0e0e" stroke-width="1"/>
<path d="M1080 563 L1130 570 M1167 565 L1201 571 M1227 577 L1475 568.5 M1266 606 L1338 602 M1355 601 L1451 593 M1120 575 L1160 590 M1290 560 L1330 590 M1400 545 L1440 560 M1180 600 L1215 585" stroke="#a8a8a8" stroke-width="1.3" fill="none" stroke-dasharray="14 5 3 5"/>
<path d="M1200 548 C1230 545 1260 544 1290 546 M1420 548 L1460 556 M1380 590 L1420 560" stroke="#9a9a9a" stroke-width="1.1" fill="none" stroke-dasharray="9 4"/>
<circle cx="1058" cy="574" r="2.8" fill="#bbb"/>
<circle cx="1252.6" cy="582" r="2.8" fill="#bbb"/>
<circle cx="1269.7" cy="582.6" r="2.8" fill="#bbb"/>
<circle cx="1457.7" cy="567.5" r="2.8" fill="#bbb"/>
<circle cx="1511" cy="560" r="2.8" fill="#bbb"/>
<circle cx="1488" cy="594" r="2.8" fill="#bbb"/>
<circle cx="1258" cy="608" r="2.8" fill="#bbb"/>
<path d="M1043 310 C1020 318 1012 332 1012 348 C1012 362 1022 374 1046 379 L1245 411 C1275 416 1304 402 1304 384 C1304 372 1298 366 1292 364 L1250 340 L1060 300 Z" fill="#232323" stroke="#0e0e0e" stroke-width="1"/>
<path d="M1025 345 C1030 337 1042 331 1052 331 L1246 369 L1281 363 C1290 366 1293 370 1293 374 C1292 384 1275 390 1260 390 L1245 389 L1051 353 C1037 350 1027 348 1025 345 Z" fill="#fff"/>
<path d="M1012 341 C1013 351 1022 358 1046 361 L1245 395.6 C1268 399 1292 392 1302 378 L1304 384 C1304 402 1275 416 1245 411 L1046 379 C1022 374 1012 362 1012 348 Z" fill="#191919"/>
<path d="M1012 341 C1013 351 1022 358 1046 361 L1245 395.6 C1268 399 1292 392 1302 378 M1046 361 L1046 379 M1245 395.6 L1245 411 M1045 316 C1030 320 1021 330 1021 339 C1022 346 1026 350 1030 351" fill="none" stroke="#0a0a0a" stroke-width="1.1"/>
<path d="M1318 290 L1394 362 L1427.5 384.5 C1440 393 1452 397.5 1465.5 397.5 C1482 397.5 1498 390 1506 380 L1510 350 L1480 300 Z" fill="#1d1d1d" stroke="#0e0e0e" stroke-width="1"/>
<path d="M1424 359 C1432 366 1438 370 1444 371 C1452 374 1458 375 1465.5 375 C1478 374 1486 371 1490.5 368.8 C1495 365 1498 361 1498 358.6 L1485 351 L1472 355 Z" fill="#fff"/><path d="M1427.5 384.5 C1440 393 1452 397.5 1465.5 397.5 C1482 397.5 1498 390 1506 380 M1431 374 L1431 390 M1394 362 L1425 361" fill="none" stroke="#2a2a2a" stroke-width="1"/>
<path d="M1044 310 C1044 305 1050 301.5 1058 301 L1252 284 C1262 282 1266 276 1266 262 C1268 232 1300 213 1335 213 L1359 217 L1549 258.7 L1585 279 L1586 290 L1507 336 L1485 350 C1476 355 1470 355 1462 355.5 L1320 368 L1255 372 L1246 369 L1068 331 L1054 328 C1046 325 1044 318 1044 310 Z" fill="#44474b" stroke="#151515" stroke-width="1.4"/>
<path d="M1054 316 L1246 356 L1320 353 L1462 342 L1507 322 L1586 280 L1586 290 L1507 336 L1485 350 C1476 355 1470 355 1462 355.5 L1320 368 L1255 372 L1246 369 L1068 331 L1054 328 Z" fill="#383b3f"/>
<path d="M1054 316 L1246 356 L1320 353 L1462 342 L1507 322 L1586 280" fill="none" stroke="#1a1a1a" stroke-width="1.1"/>
<path d="M1056 301.5 L1060 312 M1246 356 L1246 369 M1462 342 L1462 355" stroke="#1a1a1a" stroke-width="1"/>
<path d="M1095 310.5 L1251.7 295.2 C1258 294 1262 292 1265 288 M1071 312 L1256.8 342.9 M1068 322.4 L1253.4 357.3 M1069 305 L1069 334" fill="none" stroke="#1e1e1e" stroke-width="1"/>
<path d="M1359 217 L1549 258.7 L1585 279 L1580 289 L1549 268 L1359 227 Z" fill="#35383b" stroke="#1a1a1a" stroke-width="1"/>
<path d="M1266 262 L1266 320 C1270 345 1300 360 1330 360 L1345 358 L1345 300 Z" fill="#3d4145" opacity="0.9"/>
<path d="M1266 262 L1266 322 C1270 345 1300 358 1335 358" fill="none" stroke="#1a1a1a" stroke-width="1"/>
<path d="M1267 257 C1272 238 1300 226 1334 226 L1359 227" fill="none" stroke="#151515" stroke-width="1.3"/>
<line x1="1359.4" y1="217" x2="1359.4" y2="227" stroke="#151515" stroke-width="1"/>
<path d="M1392 246 C1380 234 1360 227 1334 227 C1296 227 1267 244 1267 266 C1267 288 1292 303 1322 305 L1324 296 C1304 292 1287 281 1287 264 C1287 248 1308 236 1334 236 C1354 236 1372 242 1380 252 Z" fill="#3b5341"/>
<ellipse cx="1334" cy="262" rx="46.4" ry="26.3" fill="none" stroke="#151515" stroke-width="1.1"/>
<path d="M1267 266 C1267 288 1292 304 1322 306" fill="none" stroke="#151515" stroke-width="1"/>
<path d="M1380 250 C1390 256 1402 262 1402 272 L1402 290 M1381 257 L1381 282 M1344 271 L1344 290 M1317 305 L1317 325 M1331 305 L1331 325" fill="none" stroke="#151515" stroke-width="1"/>
<ellipse cx="1334.8" cy="255" rx="29.7" ry="16.7" fill="#33363a" stroke="#111" stroke-width="1.2"/>
<ellipse cx="1334.8" cy="272" rx="29" ry="16" fill="#3a3d41" stroke="#111" stroke-width="1.1"/>
<path d="M1305.5 255 C1306 262 1312 266 1320 268" fill="none" stroke="#111" stroke-width="1"/>
<path d="M1308.8 259.7 C1316 252 1325 249.5 1334.8 249.5 C1346 249.5 1355 253 1361.7 259.7 C1358 264 1356 266 1353.3 267 C1347 266 1341 265.8 1334.8 265.8 C1328 265.8 1323 266.5 1319 267.2 C1315 265 1311 262 1308.8 259.7 Z" fill="#2f7e36"/>
<ellipse cx="1334.8" cy="268" rx="17" ry="3" fill="#555"/>
<ellipse cx="1334.8" cy="276" rx="27.4" ry="10" fill="none" stroke="#111" stroke-width="1.1"/>
<path d="M1310 276 C1310 286 1318 292 1322 296" fill="none" stroke="#111" stroke-width="1"/>
<ellipse cx="1293" cy="229.1" rx="5.2" ry="3.2" fill="none" stroke="#151515" stroke-width="1.1"/>
<ellipse cx="1293" cy="242.1" rx="5.2" ry="3.2" fill="none" stroke="#151515" stroke-width="1.1"/>
<ellipse cx="1391.4" cy="244.9" rx="5.2" ry="3.2" fill="none" stroke="#151515" stroke-width="1.1"/>
<ellipse cx="1391.4" cy="257" rx="5.2" ry="3.2" fill="none" stroke="#151515" stroke-width="1.1"/>
<ellipse cx="1319" cy="286.6" rx="5.2" ry="3.2" fill="none" stroke="#151515" stroke-width="1.1"/>
<ellipse cx="1319" cy="298.7" rx="5.2" ry="3.2" fill="none" stroke="#151515" stroke-width="1.1"/>
<ellipse cx="1258" cy="343" rx="5.2" ry="3.2" fill="none" stroke="#151515" stroke-width="1.1"/>
<ellipse cx="1258" cy="355" rx="5.2" ry="3.2" fill="none" stroke="#151515" stroke-width="1.1"/>
<ellipse cx="1464" cy="328" rx="5.2" ry="3.2" fill="none" stroke="#151515" stroke-width="1.1"/>
<ellipse cx="1464" cy="340" rx="5.2" ry="3.2" fill="none" stroke="#151515" stroke-width="1.1"/>
<ellipse cx="1057" cy="312" rx="5.2" ry="3.2" fill="none" stroke="#151515" stroke-width="1.1"/>
<ellipse cx="1057" cy="325" rx="5.2" ry="3.2" fill="none" stroke="#151515" stroke-width="1.1"/>
<path d="M1322 284 L1486 348 M1344 272 L1505 330 M1348 287 L1490 343 M1100 328 L1246 356 M1402 272 L1505 300" stroke="#1c1c1c" stroke-width="1.1" fill="none"/>
<defs><linearGradient id="tl" x1="0" y1="0" x2="1" y2="0"><stop offset="0" stop-color="#6f6f6f"/><stop offset="1" stop-color="#828282"/></linearGradient></defs>
<polygon points="1505.0,291.8 1547.6,317.0 1547.6,556.0 1505.0,531.7" fill="url(#tl)"/>
<polygon points="1547.6,317.0 1589.5,291.8 1589.8,533.0 1547.6,556.0" fill="#b2b2b2"/>
<polygon points="1505.0,291.8 1547.6,268.0 1589.5,291.8 1547.6,317.0" fill="#3b3e41"/>
<polygon points="1505.0,291.8 1547.6,317.0 1547.6,317.0 1505.0,340.0" fill="#3e4145"/>
<path d="M1507 328 L1547 306 M1505 340 L1547.6 317" stroke="#1a1a1a" stroke-width="1.1"/>
<line x1="1547.6" y1="317" x2="1547.6" y2="556" stroke="#2a2a2a" stroke-width="1.2"/>
<path d="M1547.6 270 L1547.6 317 M1509 294 L1547.6 314 L1586 294" stroke="#1a1a1a" stroke-width="1" fill="none"/>
<ellipse cx="1532" cy="291" rx="6" ry="3.5" fill="none" stroke="#151515" stroke-width="1"/>
<ellipse cx="1563" cy="291" rx="6" ry="3.5" fill="none" stroke="#151515" stroke-width="1"/>
<ellipse cx="1548" cy="281" rx="5.5" ry="3" fill="none" stroke="#151515" stroke-width="1"/>
<ellipse cx="1548" cy="288" rx="5.5" ry="3" fill="none" stroke="#151515" stroke-width="1"/>
<ellipse cx="1548" cy="301" rx="5.5" ry="3.2" fill="none" stroke="#151515" stroke-width="1"/>
<path d="M1528 299 L1528 305 M1532 299 L1532 305 M1528 302 L1532 302 M1563 299 L1567 305 M1563 305 L1567 299" stroke="#f6b63e" stroke-width="1.6"/>
<ellipse cx="1526.8" cy="327.59999999999997" rx="4" ry="5.4" fill="#6a6a6a" stroke="#1e1e1e" stroke-width="1.3"/><ellipse cx="1528.3" cy="328.59999999999997" rx="3.1" ry="4.5" fill="#f9bb42"/>
<ellipse cx="1567.8" cy="327.59999999999997" rx="4" ry="5.4" fill="#a8a8a8" stroke="#1e1e1e" stroke-width="1.3"/><ellipse cx="1566.3" cy="328.59999999999997" rx="3.1" ry="4.5" fill="#f9bb42"/>
<ellipse cx="1526.8" cy="351.0" rx="4" ry="5.4" fill="#6a6a6a" stroke="#1e1e1e" stroke-width="1.3"/><ellipse cx="1528.3" cy="352.0" rx="3.1" ry="4.5" fill="#f9bb42"/>
<ellipse cx="1567.8" cy="351.0" rx="4" ry="5.4" fill="#a8a8a8" stroke="#1e1e1e" stroke-width="1.3"/><ellipse cx="1566.3" cy="352.0" rx="3.1" ry="4.5" fill="#f9bb42"/>
<ellipse cx="1526.8" cy="374.7" rx="4" ry="5.4" fill="#6a6a6a" stroke="#1e1e1e" stroke-width="1.3"/><ellipse cx="1528.3" cy="375.7" rx="3.1" ry="4.5" fill="#f9bb42"/>
<ellipse cx="1567.8" cy="374.7" rx="4" ry="5.4" fill="#a8a8a8" stroke="#1e1e1e" stroke-width="1.3"/><ellipse cx="1566.3" cy="375.7" rx="3.1" ry="4.5" fill="#f9bb42"/>
<ellipse cx="1526.8" cy="398.9" rx="4" ry="5.4" fill="#6a6a6a" stroke="#1e1e1e" stroke-width="1.3"/><ellipse cx="1528.3" cy="399.9" rx="3.1" ry="4.5" fill="#f9bb42"/>
<ellipse cx="1567.8" cy="398.9" rx="4" ry="5.4" fill="#a8a8a8" stroke="#1e1e1e" stroke-width="1.3"/><ellipse cx="1566.3" cy="399.9" rx="3.1" ry="4.5" fill="#f9bb42"/>
<ellipse cx="1526.8" cy="423.0" rx="4" ry="5.4" fill="#6a6a6a" stroke="#1e1e1e" stroke-width="1.3"/><ellipse cx="1528.3" cy="424.0" rx="3.1" ry="4.5" fill="#f9bb42"/>
<ellipse cx="1567.8" cy="423.0" rx="4" ry="5.4" fill="#a8a8a8" stroke="#1e1e1e" stroke-width="1.3"/><ellipse cx="1566.3" cy="424.0" rx="3.1" ry="4.5" fill="#f9bb42"/>
<ellipse cx="1526.8" cy="447.09999999999997" rx="4" ry="5.4" fill="#6a6a6a" stroke="#1e1e1e" stroke-width="1.3"/><ellipse cx="1528.3" cy="448.09999999999997" rx="3.1" ry="4.5" fill="#f9bb42"/>
<ellipse cx="1567.8" cy="447.09999999999997" rx="4" ry="5.4" fill="#a8a8a8" stroke="#1e1e1e" stroke-width="1.3"/><ellipse cx="1566.3" cy="448.09999999999997" rx="3.1" ry="4.5" fill="#f9bb42"/>
<ellipse cx="1526.8" cy="471.2" rx="4" ry="5.4" fill="#6a6a6a" stroke="#1e1e1e" stroke-width="1.3"/><ellipse cx="1528.3" cy="472.2" rx="3.1" ry="4.5" fill="#f9bb42"/>
<ellipse cx="1567.8" cy="471.2" rx="4" ry="5.4" fill="#a8a8a8" stroke="#1e1e1e" stroke-width="1.3"/><ellipse cx="1566.3" cy="472.2" rx="3.1" ry="4.5" fill="#f9bb42"/>
<ellipse cx="1526.8" cy="495.3" rx="4" ry="5.4" fill="#6a6a6a" stroke="#1e1e1e" stroke-width="1.3"/><ellipse cx="1528.3" cy="496.3" rx="3.1" ry="4.5" fill="#f9bb42"/>
<ellipse cx="1567.8" cy="495.3" rx="4" ry="5.4" fill="#a8a8a8" stroke="#1e1e1e" stroke-width="1.3"/><ellipse cx="1566.3" cy="496.3" rx="3.1" ry="4.5" fill="#f9bb42"/>
<ellipse cx="1526.8" cy="519.5" rx="4" ry="5.4" fill="#6a6a6a" stroke="#1e1e1e" stroke-width="1.3"/><ellipse cx="1528.3" cy="520.5" rx="3.1" ry="4.5" fill="#f9bb42"/>
<ellipse cx="1567.8" cy="519.5" rx="4" ry="5.4" fill="#a8a8a8" stroke="#1e1e1e" stroke-width="1.3"/><ellipse cx="1566.3" cy="520.5" rx="3.1" ry="4.5" fill="#f9bb42"/>
<polygon points="1547.6,268.0 1589.5,291.8 1589.8,533.0 1547.6,556.0 1505.0,531.7 1505.0,291.8" fill="none" stroke="#f7b53b" stroke-width="2.6" stroke-linejoin="round"/>
<ellipse cx="1547" cy="412.4" rx="21.5" ry="12" fill="none" stroke="#5a7590" stroke-width="5"/><ellipse cx="1547" cy="412.4" rx="21.5" ry="12" fill="none" stroke="#dfe4ea" stroke-width="2.6"/>
<path d="M1548 412.4 L1562.6 406.1 A19.8 10.3 0 0 1 1562.6 418.7 Z" fill="#e2e2e2" stroke="#5a7590" stroke-width="1"/>
<line x1="1547.5" y1="390" x2="1547.5" y2="409.5" stroke="#1a1ab8" stroke-width="3"/><line x1="1569" y1="401" x2="1576" y2="396" stroke="#22aa22" stroke-width="2.2"/><line x1="1569" y1="425" x2="1577" y2="430" stroke="#d42a2a" stroke-width="2.2"/>
<path d="M1519 537 L1538 526 M1555 526 L1576 536 M1514 549 L1534 561" stroke="#a0a0a0" stroke-width="1" fill="none"/>
<circle cx="1547" cy="544.6" r="3.2" fill="#f4f4f4" stroke="#999" stroke-width="0.8"/><circle cx="1547" cy="520" r="2.8" fill="#999"/><circle cx="1589" cy="545" r="3" fill="#999"/><circle cx="1547" cy="568.6" r="3" fill="#999"/></svg>
<svg style="left:2185px;top:108px" width="200" height="200" viewBox="0 0 200 200">
<g fill="#dfe6ee">
<path d="M100.4 7 L109.4 18 L91.4 18 Z"/>
<path d="M100.4 193 L109.4 182 L91.4 182 Z"/>
<path d="M7 100.8 L19 92 L19 110 Z"/>
<path d="M194 100.8 L182 92 L182 110 Z"/>
<path d="M80 24 C66 28 55 34 46 42 L52 47 L35 52 L39 35 L43 39 C53 29 64 22 78 17 Z"/>
<path d="M120.8 24 C134.8 28 145.8 34 154.8 42 L148.8 47 L165.8 52 L161.8 35 L157.8 39 C147.8 29 136.8 22 122.8 17 Z"/>
<path d="M100.4 46 L145 72 Q152 76 152 84 L152 122 Q152 130 145 134 L108 155 Q100 160 92 155 L55 134 Q48 130 48 122 L48 84 Q48 76 55 72 L92 50 Q96 44 100.4 46 Z"/>
</g>
<g fill="#fff">
<path d="M100.4 61 L137 80 L100.4 100 L64 80 Z"/>
<path d="M60 88 L94 107 L94 146 L60 127 Z"/>
<path d="M107 107 L141 88 L141 127 L107 146 Z"/>
</g>
<ellipse cx="58" cy="78" rx="5" ry="9" fill="#fff" transform="rotate(30 58 78)"/>
<ellipse cx="142" cy="78" rx="5" ry="9" fill="#fff" transform="rotate(-30 142 78)"/>
<ellipse cx="100.4" cy="156" rx="8" ry="4" fill="#fff"/>
<circle cx="100.4" cy="101" r="7" fill="#fff"/>
<text font-family="Liberation Sans" font-size="13" fill="#777" transform="matrix(0.866,0.5,-0.866,0.5,91,70)">Top</text>
<text font-family="Liberation Sans" font-size="14" fill="#777" transform="matrix(0.866,0.5,0,1,66,116)">Front</text>
<text font-family="Liberation Sans" font-size="14" fill="#777" transform="matrix(0.866,-0.5,0,1,106,137)">Right</text>
<line x1="46" y1="131.5" x2="46" y2="72" stroke="#4444dd" stroke-width="2"/>
<line x1="46" y1="131.5" x2="98" y2="161" stroke="#dd3333" stroke-width="2"/>
<line x1="46" y1="131.5" x2="98" y2="102" stroke="#55bb55" stroke-width="1.2"/>
<line x1="46" y1="131.5" x2="58" y2="124.5" stroke="#229922" stroke-width="2"/>
<text x="46" y="70" font-family="Liberation Sans" font-weight="bold" font-size="15" fill="#4444dd" text-anchor="middle">Z</text>
<text x="107" y="172" font-family="Liberation Sans" font-size="15" fill="#dd3333" text-anchor="middle">X</text>
<text x="105" y="103" font-family="Liberation Sans" font-size="12" fill="#9ccc9c" text-anchor="middle">Y</text>
</svg>
<svg style="left:2329px;top:280px" width="24" height="24" viewBox="0 0 24 24"><path d="M11.5 1 L22 6.5 L22 17.5 L11.5 23 L1 17.5 L1 6.5 Z" fill="#d0d0d0" stroke="#333" stroke-width="1.3"/><path d="M1 6.5 L11.5 12 L22 6.5 M11.5 12 L11.5 23" fill="none" stroke="#333" stroke-width="1.2"/><path d="M1.5 7 L11 12 L11 22.5 L1.5 17.5 Z" fill="#999"/><path d="M11.5 1 L22 6.5 L11.5 12 L1 6.5 Z" fill="#fff" stroke="#333" stroke-width="1"/></svg>
<svg style="left:2362px;top:289px" width="12" height="8" viewBox="0 0 12 8"><path d="M0.5 0.5 L11 0.5 L5.75 7 Z" fill="#333"/></svg>
<div class="a" style="left:2358px;top:534px;width:38px;height:43px;background:#fff;border:1px solid #c4c4c4;border-right:none"></div>
<div class="a" style="left:2358px;top:576px;width:38px;height:42px;background:#fff;border:1px solid #c4c4c4;border-right:none"></div>
<div class="a" style="left:2358px;top:617px;width:38px;height:43px;background:#fff;border:1px solid #c4c4c4;border-right:none"></div>
<div class="a" style="left:2358px;top:659px;width:38px;height:42px;background:#fff;border:1px solid #c4c4c4;border-right:none"></div>
<div class="a" style="left:2358px;top:713px;width:38px;height:42px;background:#fff;border:1px solid #c4c4c4;border-right:none"></div>
<div class="a" style="left:2358px;top:754px;width:38px;height:43px;background:#fff;border:1px solid #c4c4c4;border-right:none"></div>
<svg style="left:2365px;top:543px" width="25" height="25" viewBox="0 0 25 25"><path d="M3 17 L11 3 L14 4 L9 17 Z" fill="#777"/><path d="M9 17 L16 6 L19 8 L14 17 Z" fill="#999"/><path d="M14 17 L20 10 L22 13 L20 17 Z" fill="#aaa"/><rect x="1" y="16" width="23" height="7" rx="2" fill="#eee" stroke="#555" stroke-width="1.1"/><circle cx="5" cy="19.5" r="1.3" fill="none" stroke="#555" stroke-width="0.9"/><path d="M9 16 L9 23 M16 16 L16 23" stroke="#555" stroke-width="0.9"/></svg>
<svg style="left:2365px;top:585px" width="25" height="25" viewBox="0 0 25 25"><path d="M14 7 L23 12 L23 21 L14 25 L6 21 L6 12 Z" fill="#fff" stroke="#333" stroke-width="1.4"/><path d="M6 12 L14 16.5 L23 12 M14 16.5 L14 25" fill="none" stroke="#333" stroke-width="1.3"/><rect x="1" y="1" width="12" height="9" fill="#2a6fd4"/><path d="M1 4 L13 4 M1 7 L13 7 M5 1 L5 10 M9 1 L9 10" stroke="#fff" stroke-width="0.9"/></svg>
<svg style="left:2364px;top:626px" width="27" height="25" viewBox="0 0 27 25"><path d="M2 11 Q0 12 2 13 L2 22 Q2 24 4 24 M25 11 Q27 12 25 13 L25 22 Q25 24 23 24" fill="none" stroke="#333" stroke-width="1.3"/><path d="M14 9 L21 13 L21 20 L14 24 L7 20 L7 13 Z" fill="#fff" stroke="#333" stroke-width="1.3"/><path d="M7 13 L14 17 L21 13 M14 17 L14 24" fill="none" stroke="#333" stroke-width="1.1"/><rect x="1" y="1" width="11" height="9" fill="#333"/><path d="M1 4 L12 4 M1 7 L12 7 M4.7 1 L4.7 10 M8.3 1 L8.3 10" stroke="#fff" stroke-width="0.8"/></svg>
<svg style="left:2364px;top:667px" width="28" height="26" viewBox="0 0 28 26"><rect x="2" y="1" width="12" height="9" fill="#333"/><path d="M2.6 4 L13.4 4 M2.6 7 L13.4 7 M6 1.6 L6 9.4 M10 1.6 L10 9.4" stroke="#999" stroke-width="1"/><path d="M4 10 Q1 16 4 23 M24 6 Q28 14 24 23" fill="none" stroke="#222" stroke-width="2"/><path d="M9 21 Q12 20 14 15 Q16 10 20 8 M12 10 Q15 14 17 20 Q18 22 21 21" fill="none" stroke="#222" stroke-width="2.6" stroke-linecap="round"/></svg>
<svg style="left:2364px;top:720px" width="30" height="28" viewBox="0 0 30 28"><rect x="0.5" y="0.5" width="29" height="27" rx="4" fill="#ddd"/><circle cx="15" cy="14" r="12" fill="#eab54a"/><path d="M15 14 L15 2 A12 12 0 0 1 27 14 Z" fill="#5fbcf0"/><path d="M15 14 L3 14 A12 12 0 0 1 15 2 Z" fill="#dd4444"/><path d="M15 2 A12 12 0 0 1 27 14 L15 14 Z" fill="#5fbcf0"/><path d="M6.5 5.5 A12 12 0 0 1 23.5 5.5 L15 14 Z" fill="#6cc04a"/><path d="M6.5 5.5 L15 14 L6.5 22.5 A12 12 0 0 1 6.5 5.5 Z" fill="#dd4444"/><path d="M23.5 5.5 L15 14 L23.5 22.5 A12 12 0 0 0 23.5 5.5 Z" fill="#5fbcf0"/><path d="M6.5 22.5 L15 14 L23.5 22.5 A12 12 0 0 1 6.5 22.5 Z" fill="#eab54a"/></svg>
<svg style="left:2364px;top:761px" width="30" height="28" viewBox="0 0 30 28"><rect x="0.5" y="0.5" width="29" height="27" rx="4" fill="#ddd"/><rect x="3" y="3" width="24" height="22" fill="#1a3a8a" stroke="#111" stroke-width="1.5"/><rect x="5" y="5" width="20" height="18" fill="#1e5ad8"/></svg>
<svg style="left:2359px;top:1230px" width="27" height="18" viewBox="0 0 27 18"><path d="M1.5 16.5 L1.5 14 A12 12 0 0 1 25.5 14 L25.5 16.5 Z" fill="#fff" stroke="#222" stroke-width="1.6"/><path d="M6 12 A7.5 7.5 0 0 1 21 12 L15.5 12 Q13.5 9.5 11.5 12 Z" fill="#fff" stroke="#222" stroke-width="1.3"/><path d="M4 13 A10 10 0 0 1 23 13" fill="none" stroke="#555" stroke-width="1" stroke-dasharray="0.8 1.6"/></svg>
<div class="a" style="left:50px;top:96px;width:354px;height:1160px;background:#fff;border-right:1px solid #d0d0d0;border-top:1px solid #d0d0d0"></div>
<div class="a" style="left:403px;top:644px;width:41px;height:43px;background:#fff;border:1px solid #a8a8a8;border-left:none"></div>
<svg style="left:410px;top:655px" width="27" height="22" viewBox="0 0 27 22"><path d="M1.5 1.5 L4.5 4.5 L7.5 1.5" fill="none" stroke="#222" stroke-width="1.6"/><rect x="4" y="6" width="1.6" height="15" fill="#666"/><g fill="#444"><rect x="11" y="1" width="13" height="1.8" fill="#777"/><rect x="8" y="7" width="16" height="1.8"/><rect x="8" y="13" width="16" height="1.8"/><rect x="8" y="19" width="16" height="1.8" fill="#666"/></g></svg>
<svg style="left:63px;top:116px" width="21" height="20" viewBox="0 0 21 20"><path d="M1 1.5 L19.5 1.5 L12 10.5 L12 18.5 L9 16.5 L9 10.5 Z" fill="none" stroke="#333" stroke-width="1.5" stroke-linejoin="round"/></svg>
<div class="a" style="left:99px;top:106px;width:294px;height:37px;background:#fff;border:1px solid #a0a0a0;border-radius:4px"></div>
<svg style="left:315px;top:154px" width="25" height="19" viewBox="0 0 25 19"><path d="M1.5 3.5 L1.5 1.5 L8.5 1.5 L10.5 3.5 L23 3.5 L23 17.5 L1.5 17.5 L1.5 14" fill="none" stroke="#9a9a9a" stroke-width="1.3"/><path d="M7 7.5 L7 16.5 M2.5 12 L11.5 12" stroke="#6f98d8" stroke-width="2.4"/></svg>
<svg style="left:355px;top:151px" width="22" height="24" viewBox="0 0 22 24"><circle cx="10.5" cy="13.5" r="8.5" fill="none" stroke="#222" stroke-width="2.4"/><path d="M7 2 L14 2 M10.5 2 L10.5 5" stroke="#222" stroke-width="2"/><path d="M17 5.5 L19 3.5" stroke="#222" stroke-width="1.8"/><path d="M10.5 13.5 L13.5 17" stroke="#222" stroke-width="1.6"/></svg>
<div class="a" style="left:50px;top:180.5px;width:325px;height:11px;overflow:hidden"><svg style="left:0;top:0" width="325" height="11" viewBox="50 180.5 325 11" font-family="Liberation Sans, sans-serif"><path d="M57.5 180.5 L67 180.5 L62.25 185.5 Z" fill="#555"/><text x="79.7" y="185.7" font-size="16.7" fill="#333" textLength="125.5" lengthAdjust="spacingAndGlyphs">Default geometry</text></svg></div>
<div class="a" style="left:375px;top:181px;width:21px;height:780px;background:#f1f1f1"></div>
<div class="a" style="left:377px;top:217px;width:17px;height:706px;background:#c1c1c1"></div>
<svg style="left:380px;top:188px" width="12" height="8" viewBox="0 0 12 8"><path d="M0.5 7 L11 7 L5.75 1 Z" fill="#505050"/></svg>
<svg style="left:380px;top:944px" width="12" height="8" viewBox="0 0 12 8"><path d="M0.5 1 L11 1 L5.75 7 Z" fill="#505050"/></svg>
<div class="a" style="left:56px;top:955px;width:313px;height:5px;background:#b4b4b4"></div>
<div class="a" style="left:50px;top:960px;width:346px;height:1px;background:#e2e2e2"></div>
<div class="a" style="left:50px;top:555px;width:325px;height:29px;background:#eceef3"></div>
<div class="a" style="left:50px;top:583.5px;width:325px;height:1.5px;background:#8ccdf0"></div>
<div class="a" style="left:50px;top:620px;width:325px;height:29px;background:#eceef3"></div>
<div class="a" style="left:50px;top:648.5px;width:325px;height:1.5px;background:#8ccdf0"></div>
<div class="a" style="left:50px;top:653px;width:325px;height:29px;background:#eceef3"></div>
<div class="a" style="left:50px;top:681.5px;width:325px;height:1.5px;background:#8ccdf0"></div>
<div class="a" style="left:50px;top:913px;width:325px;height:30px;background:#b3dcf4"></div>
<div class="a" style="left:50px;top:1092px;width:346px;height:30px;background:#b3dcf4"></div>
<div class="a" style="left:61px;top:196px;width:2px;height:129px;background:#d6d6d6"></div>
<div class="a" style="left:55px;top:325px;width:13px;height:2px;background:#d6d6d6"></div>
<div class="a" style="left:61px;top:424px;width:2px;height:129px;background:#d6d6d6"></div>
<div class="a" style="left:55px;top:553px;width:13px;height:2px;background:#d6d6d6"></div>
<div class="a" style="left:61px;top:587px;width:2px;height:96px;background:#d6d6d6"></div>
<div class="a" style="left:55px;top:683px;width:13px;height:2px;background:#d6d6d6"></div>
<div class="a" style="left:61px;top:716px;width:2px;height:64px;background:#d6d6d6"></div>
<div class="a" style="left:55px;top:780px;width:13px;height:2px;background:#d6d6d6"></div>
<div class="a" style="left:61px;top:813px;width:2px;height:97px;background:#d6d6d6"></div>
<div class="a" style="left:55px;top:910px;width:13px;height:2px;background:#d6d6d6"></div>
<svg style="left:86px;top:207.0px" width="10" height="10" viewBox="0 0 10 10"><circle cx="5" cy="5" r="4" fill="none" stroke="#555" stroke-width="1.2"/><circle cx="5" cy="5" r="1.6" fill="#444"/></svg>
<svg style="left:81px;top:234.5px" width="20" height="20" viewBox="0 0 20 20"><path d="M1.5 1.5 L18.5 4 L18.5 18.5 L1.5 16 Z" fill="#dcdcdc" stroke="#444" stroke-width="1.1"/><path d="M9.5 3 L9.5 10 L18.5 11" fill="none" stroke="#444" stroke-width="1.1"/></svg>
<svg style="left:81px;top:267.0px" width="20" height="20" viewBox="0 0 20 20"><path d="M1.5 1.5 L18.5 4 L18.5 18.5 L1.5 16 Z" fill="#dcdcdc" stroke="#444" stroke-width="1.1"/><path d="M9.5 3 L9.5 10 L18.5 11" fill="none" stroke="#444" stroke-width="1.1"/></svg>
<svg style="left:81px;top:299.5px" width="20" height="20" viewBox="0 0 20 20"><path d="M1.5 1.5 L18.5 4 L18.5 18.5 L1.5 16 Z" fill="#dcdcdc" stroke="#444" stroke-width="1.1"/><path d="M9.5 3 L9.5 10 L18.5 11" fill="none" stroke="#444" stroke-width="1.1"/></svg>
<svg style="left:82px;top:332.0px" width="20" height="20" viewBox="0 0 20 20"><path d="M10 1 L18.5 5.5 L18.5 14.5 L10 19 L1.5 14.5 L1.5 5.5 Z" fill="#ededed" stroke="#a0a0a0" stroke-width="1.1"/><path d="M1.5 5.5 L10 10 L18.5 5.5 M10 10 L10 19" fill="none" stroke="#a0a0a0" stroke-width="1.1"/><path d="M10 10 L18.5 5.5 L18.5 14.5 L10 19 Z" fill="#e0e0e0"/></svg>
<svg style="left:56px;top:365px" width="22" height="20" viewBox="0 0 22 20"><path d="M4 13.5 L14.5 2.5 L17 5 L6.5 16 L3 17 Z M4 13.5 L6.5 16" fill="none" stroke="#444" stroke-width="1.1" stroke-linejoin="round"/><rect x="1" y="18" width="20" height="1.6" fill="#5b8ad6"/></svg>
<svg style="left:81px;top:398.5px" width="21" height="17" viewBox="0 0 21 17"><path d="M1 1 L7.5 1 L9 3 L19.5 3 L19.5 15.5 L1 15.5 Z" fill="none" stroke="#555" stroke-width="1.2" stroke-linejoin="round"/></svg>
<svg style="left:80px;top:429.5px" width="22" height="20" viewBox="0 0 22 20"><path d="M4 13.5 L14.5 2.5 L17 5 L6.5 16 L3 17 Z M4 13.5 L6.5 16" fill="none" stroke="#9a9a9a" stroke-width="1.1" stroke-linejoin="round"/><rect x="1" y="18" width="20" height="1.6" fill="#8fb0e6"/></svg>
<svg style="left:81px;top:462.0px" width="20" height="20" viewBox="0 0 20 20"><path d="M0.8 3.3 L3.3 0.8 L16.5 0.8 L18.8 3 L18.8 18.8 L3.3 18.8 L0.8 16.3 Z" fill="#fff" stroke="#444" stroke-width="1.1"/><path d="M3.3 0.8 L3.3 18.8 M0.8 3.3 L16.5 3.3 L18.8 3" fill="none" stroke="#444" stroke-width="0.8"/><path d="M6.5 9 L8.5 7 L18.8 7 L18.8 18.8 L6.5 18.8 Z" fill="#8f8f8f" stroke="#444" stroke-width="1"/><path d="M8.5 7 L8.5 18.8 M6.5 9 L18.8 9" stroke="#444" stroke-width="0.7"/></svg>
<svg style="left:80px;top:494.5px" width="22" height="20" viewBox="0 0 22 20"><path d="M4 13.5 L14.5 2.5 L17 5 L6.5 16 L3 17 Z M4 13.5 L6.5 16" fill="none" stroke="#9a9a9a" stroke-width="1.1" stroke-linejoin="round"/><rect x="1" y="18" width="20" height="1.6" fill="#8fb0e6"/></svg>
<svg style="left:81px;top:527.0px" width="20" height="20" viewBox="0 0 20 20"><path d="M0.8 3.3 L3.3 0.8 L16.5 0.8 L18.8 3 L18.8 18.8 L3.3 18.8 L0.8 16.3 Z" fill="#fff" stroke="#444" stroke-width="1.1"/><path d="M3.3 0.8 L3.3 18.8 M0.8 3.3 L16.5 3.3 L18.8 3" fill="none" stroke="#444" stroke-width="0.8"/><path d="M6.5 9 L8.5 7 L18.8 7 L18.8 18.8 L6.5 18.8 Z" fill="#8f8f8f" stroke="#444" stroke-width="1"/><path d="M8.5 7 L8.5 18.8 M6.5 9 L18.8 9" stroke="#444" stroke-width="0.7"/></svg>
<svg style="left:81px;top:561.0px" width="21" height="17" viewBox="0 0 21 17"><path d="M1 1 L7.5 1 L9 3 L19.5 3 L19.5 15.5 L1 15.5 Z" fill="none" stroke="#555" stroke-width="1.2" stroke-linejoin="round"/></svg>
<svg style="left:80px;top:592.0px" width="22" height="20" viewBox="0 0 22 20"><path d="M4 13.5 L14.5 2.5 L17 5 L6.5 16 L3 17 Z M4 13.5 L6.5 16" fill="none" stroke="#9a9a9a" stroke-width="1.1" stroke-linejoin="round"/><rect x="1" y="18" width="20" height="1.6" fill="#8fb0e6"/></svg>
<svg style="left:81px;top:624.5px" width="20" height="20" viewBox="0 0 20 20"><path d="M0.8 3.3 L3.3 0.8 L16.5 0.8 L18.8 3 L18.8 18.8 L3.3 18.8 L0.8 16.3 Z" fill="#fff" stroke="#444" stroke-width="1.1"/><path d="M3.3 0.8 L3.3 18.8 M0.8 3.3 L16.5 3.3 L18.8 3" fill="none" stroke="#444" stroke-width="0.8"/><path d="M6.5 9 L8.5 7 L18.8 7 L18.8 18.8 L6.5 18.8 Z" fill="#8f8f8f" stroke="#444" stroke-width="1"/><path d="M8.5 7 L8.5 18.8 M6.5 9 L18.8 9" stroke="#444" stroke-width="0.7"/></svg>
<svg style="left:80px;top:655.0px" width="22" height="24" viewBox="0 0 22 24"><path d="M1 1.5 L10.5 1.5 L20.5 6.5 L20.5 22 L10.5 22 L1 16.5 Z" fill="#fff" stroke="#333" stroke-width="1.4"/><path d="M10.5 6.5 L20.5 6.5 L20.5 22 L10.5 22 Z" fill="#9a9a9a" stroke="#333" stroke-width="1.2"/><path d="M1 1.5 L10.5 6.5 M11.5 8 L19 8 L12.5 19" fill="none" stroke="#555" stroke-width="0.9"/><g fill="#555"><ellipse cx="4" cy="6" rx="1.2" ry="1.7"/><ellipse cx="8" cy="8.5" rx="1.2" ry="1.7"/><ellipse cx="4" cy="12" rx="1.2" ry="1.7"/><ellipse cx="8" cy="15" rx="1.2" ry="1.7"/></g></svg>
<svg style="left:81px;top:691.0px" width="21" height="17" viewBox="0 0 21 17"><path d="M1 1 L7.5 1 L9 3 L19.5 3 L19.5 15.5 L1 15.5 Z" fill="none" stroke="#555" stroke-width="1.2" stroke-linejoin="round"/></svg>
<svg style="left:80px;top:722.0px" width="22" height="20" viewBox="0 0 22 20"><path d="M4 13.5 L14.5 2.5 L17 5 L6.5 16 L3 17 Z M4 13.5 L6.5 16" fill="none" stroke="#9a9a9a" stroke-width="1.1" stroke-linejoin="round"/><rect x="1" y="18" width="20" height="1.6" fill="#8fb0e6"/></svg>
<svg style="left:81px;top:754.5px" width="20" height="20" viewBox="0 0 20 20"><path d="M0.8 3.3 L3.3 0.8 L16.5 0.8 L18.8 3 L18.8 18.8 L3.3 18.8 L0.8 16.3 Z" fill="#fff" stroke="#444" stroke-width="1.1"/><path d="M3.3 0.8 L3.3 18.8 M0.8 3.3 L16.5 3.3 L18.8 3" fill="none" stroke="#444" stroke-width="0.8"/><path d="M6.5 9 L8.5 7 L18.8 7 L18.8 18.8 L6.5 18.8 Z" fill="#8f8f8f" stroke="#444" stroke-width="1"/><path d="M8.5 7 L8.5 18.8 M6.5 9 L18.8 9" stroke="#444" stroke-width="0.7"/></svg>
<svg style="left:81px;top:788.5px" width="21" height="17" viewBox="0 0 21 17"><path d="M1 1 L7.5 1 L9 3 L19.5 3 L19.5 15.5 L1 15.5 Z" fill="none" stroke="#555" stroke-width="1.2" stroke-linejoin="round"/></svg>
<svg style="left:80px;top:818.5px" width="22" height="22" viewBox="0 0 22 22"><path d="M5 19.5 L17 15 C20 14 21 12 20 10 L15 2.5 C13 0.5 10 1 9 3 L2 14 C0 17 2 20.5 5 19.5 Z" fill="#fff" stroke="#777" stroke-width="1.1"/><circle cx="13" cy="5" r="4" fill="#b2b2b2" stroke="#888" stroke-width="0.8"/><circle cx="6" cy="15.5" r="5" fill="#b2b2b2" stroke="#888" stroke-width="0.8"/><circle cx="18" cy="13" r="2.6" fill="#b2b2b2" stroke="#888" stroke-width="0.8"/></svg>
<svg style="left:80px;top:851.0px" width="22" height="22" viewBox="0 0 22 22"><path d="M5 19.5 L17 15 C20 14 21 12 20 10 L15 2.5 C13 0.5 10 1 9 3 L2 14 C0 17 2 20.5 5 19.5 Z" fill="#fff" stroke="#777" stroke-width="1.1"/><circle cx="13" cy="5" r="4" fill="#b2b2b2" stroke="#888" stroke-width="0.8"/><circle cx="6" cy="15.5" r="5" fill="#b2b2b2" stroke="#888" stroke-width="0.8"/><circle cx="18" cy="13" r="2.6" fill="#b2b2b2" stroke="#888" stroke-width="0.8"/></svg>
<svg style="left:80px;top:883.5px" width="22" height="22" viewBox="0 0 22 22"><path d="M5 19.5 L17 15 C20 14 21 12 20 10 L15 2.5 C13 0.5 10 1 9 3 L2 14 C0 17 2 20.5 5 19.5 Z" fill="#fff" stroke="#777" stroke-width="1.1"/><circle cx="13" cy="5" r="4" fill="#b2b2b2" stroke="#888" stroke-width="0.8"/><circle cx="6" cy="15.5" r="5" fill="#b2b2b2" stroke="#888" stroke-width="0.8"/><circle cx="18" cy="13" r="2.6" fill="#b2b2b2" stroke="#888" stroke-width="0.8"/></svg>
<svg style="left:81px;top:917.5px" width="21" height="19" viewBox="0 0 21 19"><rect x="0.7" y="0.7" width="19.5" height="17.5" rx="1.5" fill="none" stroke="#8a8a8a" stroke-width="1"/></svg>
<svg style="left:55px;top:402.0px" width="15" height="10" viewBox="0 0 15 10"><path d="M1.5 1.5 L7.5 7.5 L13.5 1.5" fill="none" stroke="#555" stroke-width="2.4" stroke-linecap="round"/></svg>
<svg style="left:55px;top:564.5px" width="15" height="10" viewBox="0 0 15 10"><path d="M1.5 1.5 L7.5 7.5 L13.5 1.5" fill="none" stroke="#555" stroke-width="2.4" stroke-linecap="round"/></svg>
<svg style="left:55px;top:694.5px" width="15" height="10" viewBox="0 0 15 10"><path d="M1.5 1.5 L7.5 7.5 L13.5 1.5" fill="none" stroke="#555" stroke-width="2.4" stroke-linecap="round"/></svg>
<svg style="left:55px;top:792.0px" width="15" height="10" viewBox="0 0 15 10"><path d="M1.5 1.5 L7.5 7.5 L13.5 1.5" fill="none" stroke="#555" stroke-width="2.4" stroke-linecap="round"/></svg>
<svg style="left:57px;top:334.5px" width="11" height="15" viewBox="0 0 11 15"><path d="M1.5 1.5 L8.5 7.5 L1.5 13.5" fill="none" stroke="#555" stroke-width="2.4" stroke-linecap="round"/></svg>
<svg style="left:57px;top:919.5px" width="11" height="15" viewBox="0 0 11 15"><path d="M1.5 1.5 L8.5 7.5 L1.5 13.5" fill="none" stroke="#555" stroke-width="2.4" stroke-linecap="round"/></svg>
<svg style="left:322px;top:330.5px" width="7" height="22" viewBox="0 0 7 22"><g fill="#2a2a2a"><rect x="2.2" y="0.6" width="2.6" height="2.6"/><rect x="2.2" y="4.3" width="2.6" height="2.6"/><circle cx="3.5" cy="11" r="3.5"/><rect x="2.2" y="15.3" width="2.6" height="2.6"/><rect x="2.2" y="19" width="2.6" height="2.6"/></g></svg>
<svg style="left:322px;top:655.5px" width="7" height="22" viewBox="0 0 7 22"><g fill="#2a2a2a"><rect x="2.2" y="0.6" width="2.6" height="2.6"/><rect x="2.2" y="4.3" width="2.6" height="2.6"/><circle cx="3.5" cy="11" r="3.5"/><rect x="2.2" y="15.3" width="2.6" height="2.6"/><rect x="2.2" y="19" width="2.6" height="2.6"/></g></svg>
<svg style="left:322px;top:818.0px" width="7" height="22" viewBox="0 0 7 22"><g fill="#2a2a2a"><rect x="2.2" y="0.6" width="2.6" height="2.6"/><rect x="2.2" y="4.3" width="2.6" height="2.6"/><circle cx="3.5" cy="11" r="3.5"/><rect x="2.2" y="15.3" width="2.6" height="2.6"/><rect x="2.2" y="19" width="2.6" height="2.6"/></g></svg>
<svg style="left:322px;top:850.5px" width="7" height="22" viewBox="0 0 7 22"><g fill="#2a2a2a"><rect x="2.2" y="0.6" width="2.6" height="2.6"/><rect x="2.2" y="4.3" width="2.6" height="2.6"/><circle cx="3.5" cy="11" r="3.5"/><rect x="2.2" y="15.3" width="2.6" height="2.6"/><rect x="2.2" y="19" width="2.6" height="2.6"/></g></svg>
<svg style="left:322px;top:883.0px" width="7" height="22" viewBox="0 0 7 22"><g fill="#2a2a2a"><rect x="2.2" y="0.6" width="2.6" height="2.6"/><rect x="2.2" y="4.3" width="2.6" height="2.6"/><circle cx="3.5" cy="11" r="3.5"/><rect x="2.2" y="15.3" width="2.6" height="2.6"/><rect x="2.2" y="19" width="2.6" height="2.6"/></g></svg>
<svg style="left:322px;top:915.5px" width="7" height="22" viewBox="0 0 7 22"><g fill="#2a2a2a"><rect x="2.2" y="0.6" width="2.6" height="2.6"/><rect x="2.2" y="4.3" width="2.6" height="2.6"/><circle cx="3.5" cy="11" r="3.5"/><rect x="2.2" y="15.3" width="2.6" height="2.6"/><rect x="2.2" y="19" width="2.6" height="2.6"/></g></svg>
<svg style="left:55px;top:971.6px" width="15" height="10" viewBox="0 0 15 10"><path d="M1.5 1.5 L7.5 7.5 L13.5 1.5" fill="none" stroke="#555" stroke-width="2.4" stroke-linecap="round"/></svg>
<svg style="left:81px;top:999.1px" width="20" height="20" viewBox="0 0 20 20"><path d="M8.9 0.8 L14.9 0.8 L18.6 4 L18.6 18.5 L4.3 18.5 L0.8 14.8 L0.8 8.9 L8.9 8.9 Z" fill="#fff" stroke="#555" stroke-width="1.1" stroke-linejoin="round"/><path d="M8.9 0.8 L13.4 4.3 L18.6 4.3 M13.4 4.3 L13.4 13 L4.3 13 L0.8 8.9 M4.3 13 L4.3 18.5" fill="none" stroke="#999" stroke-width="0.9"/><path d="M8.9 8.9 L13.4 13" fill="none" stroke="#555" stroke-width="1" stroke-dasharray="1.2 1"/></svg>
<svg style="left:81px;top:1031.6px" width="20" height="20" viewBox="0 0 20 20"><path d="M8.9 0.8 L14.9 0.8 L18.6 4 L18.6 18.5 L4.3 18.5 L0.8 14.8 L0.8 8.9 L8.9 8.9 Z" fill="#fff" stroke="#555" stroke-width="1.1" stroke-linejoin="round"/><path d="M8.9 0.8 L13.4 4.3 L18.6 4.3 M13.4 4.3 L13.4 13 L4.3 13 L0.8 8.9 M4.3 13 L4.3 18.5" fill="none" stroke="#999" stroke-width="0.9"/><path d="M8.9 8.9 L13.4 13" fill="none" stroke="#555" stroke-width="1" stroke-dasharray="1.2 1"/></svg>
<svg style="left:81px;top:1064.1px" width="20" height="20" viewBox="0 0 20 20"><path d="M8.9 0.8 L14.9 0.8 L18.6 4 L18.6 18.5 L4.3 18.5 L0.8 14.8 L0.8 8.9 L8.9 8.9 Z" fill="#fff" stroke="#555" stroke-width="1.1" stroke-linejoin="round"/><path d="M8.9 0.8 L13.4 4.3 L18.6 4.3 M13.4 4.3 L13.4 13 L4.3 13 L0.8 8.9 M4.3 13 L4.3 18.5" fill="none" stroke="#999" stroke-width="0.9"/><path d="M8.9 8.9 L13.4 13" fill="none" stroke="#555" stroke-width="1" stroke-dasharray="1.2 1"/></svg>
<svg style="left:81px;top:1096.6px" width="20" height="20" viewBox="0 0 20 20"><path d="M8.9 0.8 L14.9 0.8 L18.6 4 L18.6 18.5 L4.3 18.5 L0.8 14.8 L0.8 8.9 L8.9 8.9 Z" fill="#fff" stroke="#555" stroke-width="1.1" stroke-linejoin="round"/><path d="M8.9 0.8 L13.4 4.3 L18.6 4.3 M13.4 4.3 L13.4 13 L4.3 13 L0.8 8.9 M4.3 13 L4.3 18.5" fill="none" stroke="#999" stroke-width="0.9"/><path d="M8.9 8.9 L13.4 13" fill="none" stroke="#555" stroke-width="1" stroke-dasharray="1.2 1"/></svg>
<svg style="left:81px;top:1129.1px" width="20" height="20" viewBox="0 0 20 20"><path d="M8.9 0.8 L14.9 0.8 L18.6 4 L18.6 18.5 L4.3 18.5 L0.8 14.8 L0.8 8.9 L8.9 8.9 Z" fill="#fff" stroke="#555" stroke-width="1.1" stroke-linejoin="round"/><path d="M8.9 0.8 L13.4 4.3 L18.6 4.3 M13.4 4.3 L13.4 13 L4.3 13 L0.8 8.9 M4.3 13 L4.3 18.5" fill="none" stroke="#999" stroke-width="0.9"/><path d="M8.9 8.9 L13.4 13" fill="none" stroke="#555" stroke-width="1" stroke-dasharray="1.2 1"/></svg>
<svg style="left:81px;top:1161.6px" width="20" height="20" viewBox="0 0 20 20"><path d="M8.9 0.8 L14.9 0.8 L18.6 4 L18.6 18.5 L4.3 18.5 L0.8 14.8 L0.8 8.9 L8.9 8.9 Z" fill="#fff" stroke="#555" stroke-width="1.1" stroke-linejoin="round"/><path d="M8.9 0.8 L13.4 4.3 L18.6 4.3 M13.4 4.3 L13.4 13 L4.3 13 L0.8 8.9 M4.3 13 L4.3 18.5" fill="none" stroke="#999" stroke-width="0.9"/><path d="M8.9 8.9 L13.4 13" fill="none" stroke="#555" stroke-width="1" stroke-dasharray="1.2 1"/></svg>
<svg style="left:81px;top:1194.1px" width="20" height="20" viewBox="0 0 20 20"><path d="M8.9 0.8 L14.9 0.8 L18.6 4 L18.6 18.5 L4.3 18.5 L0.8 14.8 L0.8 8.9 L8.9 8.9 Z" fill="#fff" stroke="#555" stroke-width="1.1" stroke-linejoin="round"/><path d="M8.9 0.8 L13.4 4.3 L18.6 4.3 M13.4 4.3 L13.4 13 L4.3 13 L0.8 8.9 M4.3 13 L4.3 18.5" fill="none" stroke="#999" stroke-width="0.9"/><path d="M8.9 8.9 L13.4 13" fill="none" stroke="#555" stroke-width="1" stroke-dasharray="1.2 1"/></svg>
<svg style="left:81px;top:1226.6px" width="20" height="20" viewBox="0 0 20 20"><path d="M8.9 0.8 L14.9 0.8 L18.6 4 L18.6 18.5 L4.3 18.5 L0.8 14.8 L0.8 8.9 L8.9 8.9 Z" fill="#fff" stroke="#555" stroke-width="1.1" stroke-linejoin="round"/><path d="M8.9 0.8 L13.4 4.3 L18.6 4.3 M13.4 4.3 L13.4 13 L4.3 13 L0.8 8.9 M4.3 13 L4.3 18.5" fill="none" stroke="#999" stroke-width="0.9"/><path d="M8.9 8.9 L13.4 13" fill="none" stroke="#555" stroke-width="1" stroke-dasharray="1.2 1"/></svg>
<svg style="left:11px;top:61px" width="28" height="26" viewBox="0 0 28 26"><circle cx="6.5" cy="5.5" r="4.3" fill="none" stroke="#2a2a2a" stroke-width="2"/><path d="M6.5 9.8 L6.5 21.5 M6.5 17 L10 17 Q12 17 12 14.5" fill="none" stroke="#2a2a2a" stroke-width="2"/><circle cx="6.5" cy="21.5" r="2.4" fill="#2a2a2a"/><circle cx="12.3" cy="13" r="2.3" fill="#2a2a2a"/><g fill="#2a2a2a"><rect x="13.5" y="3" width="12.5" height="2.4"/><rect x="16" y="9" width="10" height="2.4"/><rect x="16" y="15" width="10" height="2.4"/><rect x="13.5" y="21" width="12.5" height="2.4"/></g></svg>
<svg style="left:14px;top:104px" width="24" height="27" viewBox="0 0 24 27"><g fill="#2a2a2a"><rect x="3.3" y="1.5" width="2.6" height="3"/><rect x="3.3" y="6.5" width="2.6" height="3"/><circle cx="4.6" cy="14.5" r="3.5"/><rect x="3.3" y="19.5" width="2.6" height="3"/><rect x="3.3" y="24" width="2.6" height="3"/></g><path d="M15.5 12 L15.5 22.5 M10.3 17.3 L20.7 17.3" stroke="#1a54c0" stroke-width="2.8"/></svg>
<svg style="left:12px;top:149px" width="26" height="24" viewBox="0 0 26 24"><ellipse cx="13" cy="9" rx="12.2" ry="8.2" fill="#2a2a2a"/><path d="M4 13 L1.5 22.5 L11 16 Z" fill="#2a2a2a"/></svg>
<svg style="left:12px;top:192px" width="26" height="26" viewBox="0 0 26 26"><circle cx="14" cy="14" r="9" fill="none" stroke="#2a2a2a" stroke-width="2.4"/><path d="M10.5 2.5 L17.5 2.5 M14 2.5 L14 5" stroke="#2a2a2a" stroke-width="2"/><path d="M14 14 L18 9.5" stroke="#2a2a2a" stroke-width="2"/><path d="M1 11 L5.5 11 M0.5 14.5 L5 14.5 M1.5 18 L6 18" stroke="#2a2a2a" stroke-width="1.3"/></svg>
<svg style="left:13px;top:238px" width="23" height="25" viewBox="0 0 23 25"><rect x="1.5" y="1.5" width="19.5" height="22" rx="2.5" fill="none" stroke="#2a2a2a" stroke-width="2.2"/><g fill="none" stroke="#2a2a2a" stroke-width="1.3"><path d="M4.5 6.5 L6 8 L8.5 5"/><path d="M4.5 11.5 L6 13 L8.5 10"/><path d="M4.5 16.5 L6 18 L8.5 15"/></g><g fill="#2a2a2a"><rect x="10.5" y="6" width="7.5" height="2.4"/><rect x="10.5" y="11" width="7.5" height="2.4"/><rect x="10.5" y="16" width="7.5" height="2.4"/></g></svg>
<div class="a" style="left:422.5px;top:100px;width:275.5px;height:366px;background:#fff;box-shadow:0 3px 11px rgba(0,0,0,0.24)"></div>
<div class="a" style="left:628px;top:100px;width:35px;height:35px;background:#079a17"></div>
<svg style="left:636px;top:110px" width="20" height="16" viewBox="0 0 20 16"><path d="M2 8 L7.5 13.5 L18 2.5" fill="none" stroke="#fff" stroke-width="3.4"/></svg>
<svg style="left:672px;top:110px" width="17" height="17" viewBox="0 0 17 17"><path d="M2 2 L15 15 M15 2 L2 15" stroke="#c9252f" stroke-width="3.4"/></svg>
<div class="a" style="left:424px;top:135px;width:273px;height:1px;background:#dcdcdc"></div>
<div class="a" style="left:424px;top:166px;width:134px;height:2px;background:#1a54c0"></div>
<div class="a" style="left:558px;top:167px;width:139px;height:1px;background:#dcdcdc"></div>
<div class="a" style="left:426px;top:177px;width:268px;height:53px;background:#dff0fa;border:1.5px solid #1a54c0;border-radius:3px"></div>
<svg style="left:668px;top:211px" width="12" height="11" viewBox="0 0 12 11"><path d="M1 1 L10.5 10 M10.5 1 L1 10" stroke="#555" stroke-width="1.4"/></svg>
<div class="a" style="left:426px;top:238px;width:235px;height:53px;background:#fff;border:1px solid #cfcfcf;border-radius:3px"></div>
<svg style="left:636px;top:272px" width="11" height="11" viewBox="0 0 11 11"><path d="M1 1 L10 10 M10 1 L1 10" stroke="#555" stroke-width="1.4"/></svg>
<svg style="left:666px;top:242px" width="23" height="23" viewBox="0 0 23 23"><circle cx="11.5" cy="11.5" r="10.5" fill="#fff" stroke="#333" stroke-width="1.1"/><circle cx="11.5" cy="11.5" r="8" fill="none" stroke="#333" stroke-width="1.6"/><path d="M11.5 4.5 L11.5 11.5 L18.5 11.5" fill="none" stroke="#333" stroke-width="1.6"/></svg>
<div class="a" style="left:505px;top:329.5px;width:160px;height:1px;background:#c8c8c8"></div>
<svg style="left:647px;top:310px" width="12" height="7" viewBox="0 0 12 7"><path d="M0.5 0.5 L11 0.5 L5.75 6 Z" fill="#333"/></svg>
<div class="a" style="left:428px;top:343.5px;width:15px;height:14.5px;background:#fff;border:1px solid #666;border-radius:2.5px"></div>
<div class="a" style="left:428px;top:377.5px;width:15px;height:14.5px;background:#1a54c0;border-radius:2.5px"></div>
<svg style="left:430px;top:380.0px" width="11" height="10" viewBox="0 0 11 10"><path d="M1.5 5 L4.3 7.8 L9.5 2" fill="none" stroke="#fff" stroke-width="2"/></svg>
<div class="a" style="left:428px;top:411.7px;width:15px;height:14.5px;background:#1a54c0;border-radius:2.5px"></div>
<svg style="left:430px;top:414.2px" width="11" height="10" viewBox="0 0 11 10"><path d="M1.5 5 L4.3 7.8 L9.5 2" fill="none" stroke="#fff" stroke-width="2"/></svg>
<div class="a" style="left:431px;top:454px;width:140px;height:2px;background:#666"></div>
<svg style="left:521px;top:447px" width="16" height="16" viewBox="0 0 16 16"><circle cx="8" cy="8" r="6.5" fill="#fff" stroke="#888" stroke-width="1.2"/></svg>
<svg style="left:0px;top:1276px" width="50" height="18" viewBox="0 0 50 18"><path d="M0 0 L0 18 L50 18 L50 17 L42 17 L14 17 C6 17 0 11 0 4 Z" fill="#0b5cad"/></svg>
<svg style="left:0;top:0;will-change:transform" width="2398" height="1294" viewBox="0 0 2398 1294" font-family="Liberation Sans, sans-serif">
<text x="38" y="31.7" font-size="21.50" fill="#6e6e6e" font-weight="normal" font-style="normal" text-anchor="start" textLength="87" lengthAdjust="spacingAndGlyphs" >onshape</text>
<text x="177.5" y="35.8" font-size="28.57" fill="#2e2e2e" font-weight="bold" font-style="normal" text-anchor="start" textLength="403.5" lengthAdjust="spacingAndGlyphs" >1E - Practice Exercise Solutions</text>
<text x="593" y="36" font-size="19.86" fill="#8c8c8c" font-weight="normal" font-style="normal" text-anchor="start" textLength="40.5" lengthAdjust="spacingAndGlyphs" >Main</text>
<text x="707.2" y="34.2" font-size="20.29" fill="#8c8c8c" font-weight="normal" font-style="normal" text-anchor="start" textLength="64.5" lengthAdjust="spacingAndGlyphs" >Stage 1</text>
<text x="1961" y="24" font-size="13.00" fill="#fff" font-weight="bold" font-style="normal" text-anchor="middle" >9+</text>
<text x="2110.5" y="31.9" font-size="17.14" fill="#fff" font-weight="bold" font-style="normal" text-anchor="start" textLength="45" lengthAdjust="spacingAndGlyphs" >Share</text>
<text x="2194.7" y="35.5" font-size="18.00" fill="#fff" font-weight="bold" font-style="normal" text-anchor="middle" >?</text>
<text x="2277.5" y="32.75" font-size="16.57" fill="#333" font-weight="normal" font-style="normal" text-anchor="start" textLength="93.8" lengthAdjust="spacingAndGlyphs" >Jonathan Mi</text>
<text x="180" y="80" font-size="17.14" fill="#333" font-weight="normal" font-style="normal" text-anchor="start" textLength="53" lengthAdjust="spacingAndGlyphs" >Sketch</text>
<text x="1603" y="81" font-size="21.00" fill="#222" font-weight="bold" font-style="italic" text-anchor="middle" textLength="26" lengthAdjust="spacingAndGlyphs">(x)</text>
<text x="1763.8" y="79.7" font-size="16.43" fill="#333" font-weight="normal" font-style="normal" text-anchor="start" textLength="107.5" lengthAdjust="spacingAndGlyphs" >Search tools...</text>
<text x="1890.0" y="80.5" font-size="15.00" fill="#333" font-weight="normal" font-style="normal" text-anchor="middle" >ctrl</text>
<text x="1921.0" y="80.5" font-size="15.00" fill="#333" font-weight="normal" font-style="normal" text-anchor="middle" >shift</text>
<text x="1948.75" y="80.5" font-size="15.00" fill="#333" font-weight="normal" font-style="normal" text-anchor="middle" >p</text>
<text x="163" y="1280.5" font-size="17.14" fill="#555" font-weight="normal" font-style="normal" text-anchor="start" textLength="118" lengthAdjust="spacingAndGlyphs" >Exercise 7 - Ver</text>
<text x="350" y="1281" font-size="17.14" fill="#666" font-weight="normal" font-style="normal" text-anchor="start" textLength="160" lengthAdjust="spacingAndGlyphs" >Exercise 7 Assembly</text>
<text x="603" y="1280.5" font-size="17.14" fill="#333" font-weight="normal" font-style="normal" text-anchor="start" textLength="169" lengthAdjust="spacingAndGlyphs" >Exercise 7 Part Studio</text>
<text x="2379" y="782" font-size="15.00" fill="#fff" font-weight="bold" font-style="normal" text-anchor="middle" textLength="19" lengthAdjust="spacingAndGlyphs" font-family="Liberation Serif">MK</text>
<text x="107" y="131.5" font-size="17.86" fill="#8a8a8a" font-weight="normal" font-style="italic" text-anchor="start" textLength="155.5" lengthAdjust="spacingAndGlyphs" >Filter by name or type</text>
<text x="55.6" y="167.8" font-size="15.86" fill="#222" font-weight="bold" font-style="normal" text-anchor="start" textLength="98" lengthAdjust="spacingAndGlyphs" >Features (19)</text>
<text x="106.8" y="218.0" font-size="16.70" fill="#333" font-weight="normal" font-style="normal" text-anchor="start" textLength="42.5" lengthAdjust="spacingAndGlyphs" >Origin</text>
<text x="106.8" y="250.5" font-size="16.70" fill="#333" font-weight="normal" font-style="normal" text-anchor="start" textLength="27" lengthAdjust="spacingAndGlyphs" >Top</text>
<text x="106.8" y="283.0" font-size="16.70" fill="#333" font-weight="normal" font-style="normal" text-anchor="start" >Front</text>
<text x="106.8" y="315.5" font-size="16.70" fill="#333" font-weight="normal" font-style="normal" text-anchor="start" >Right</text>
<text x="106.8" y="348.0" font-size="16.70" fill="#9b9b9b" font-weight="normal" font-style="normal" text-anchor="start" >Origin Cube</text>
<text x="82" y="380.5" font-size="16.70" fill="#333" font-weight="normal" font-style="normal" text-anchor="start" >Layout Sketch</text>
<text x="107" y="413.0" font-size="16.70" fill="#333" font-weight="normal" font-style="normal" text-anchor="start" >Plates (4)</text>
<text x="107" y="445.5" font-size="16.70" fill="#9b9b9b" font-weight="normal" font-style="normal" text-anchor="start" >Plate Sketch</text>
<text x="107" y="478.0" font-size="16.70" fill="#333" font-weight="normal" font-style="normal" text-anchor="start" >Plate Extrude</text>
<text x="107" y="510.5" font-size="16.70" fill="#9b9b9b" font-weight="normal" font-style="normal" text-anchor="start" textLength="249.5" lengthAdjust="spacingAndGlyphs" >Top Plate Sketch w/ Motor Moun...</text>
<text x="107" y="543.0" font-size="16.70" fill="#333" font-weight="normal" font-style="normal" text-anchor="start" >Top Plate Extrude</text>
<text x="107" y="575.5" font-size="16.70" fill="#333" font-weight="normal" font-style="normal" text-anchor="start" >Tubes (3)</text>
<text x="107" y="608.0" font-size="16.70" fill="#9b9b9b" font-weight="normal" font-style="normal" text-anchor="start" >Tube Sketch</text>
<text x="107" y="640.5" font-size="16.70" fill="#333" font-weight="normal" font-style="normal" text-anchor="start" >Tube Extrude</text>
<text x="106" y="673.0" font-size="16.70" fill="#333" font-weight="normal" font-style="normal" text-anchor="start" >1x1 Convert</text>
<text x="107" y="705.5" font-size="16.70" fill="#333" font-weight="normal" font-style="normal" text-anchor="start" >Motor Spacer (2)</text>
<text x="107" y="738.0" font-size="16.70" fill="#9b9b9b" font-weight="normal" font-style="normal" text-anchor="start" >Motor Spacer Sketch</text>
<text x="107" y="770.5" font-size="16.70" fill="#333" font-weight="normal" font-style="normal" text-anchor="start" >Extrude 1</text>
<text x="107" y="803.0" font-size="16.70" fill="#333" font-weight="normal" font-style="normal" text-anchor="start" >Belts (3)</text>
<text x="106.5" y="835.5" font-size="16.70" fill="#333" font-weight="normal" font-style="normal" text-anchor="start" textLength="183" lengthAdjust="spacingAndGlyphs" >50T 5M Belt - 249.24mm</text>
<text x="106.5" y="868.0" font-size="16.70" fill="#333" font-weight="normal" font-style="normal" text-anchor="start" textLength="182.5" lengthAdjust="spacingAndGlyphs" >60T 5M Belt - 299.24mm</text>
<text x="106.5" y="900.5" font-size="16.70" fill="#333" font-weight="normal" font-style="normal" text-anchor="start" textLength="182.5" lengthAdjust="spacingAndGlyphs" >60T 5M Belt - 299.24mm</text>
<text x="108" y="933.0" font-size="16.70" fill="#2a2a2a" font-weight="bold" font-style="normal" text-anchor="start" textLength="186" lengthAdjust="spacingAndGlyphs" >Tube Assembly mirror 1</text>
<text x="91.5" y="932.0" font-size="13.00" fill="#2a2a2a" font-weight="bold" font-style="normal" text-anchor="middle" textLength="17" lengthAdjust="spacingAndGlyphs" >Am</text>
<text x="79" y="982.6" font-size="16.70" fill="#333" font-weight="normal" font-style="normal" text-anchor="start" >Parts (8)</text>
<text x="107" y="1015.1" font-size="16.70" fill="#333" font-weight="normal" font-style="normal" text-anchor="start" >Origin Cube</text>
<text x="107" y="1047.6" font-size="16.70" fill="#333" font-weight="normal" font-style="normal" text-anchor="start" >Bottom Plate</text>
<text x="107" y="1080.1" font-size="16.70" fill="#333" font-weight="normal" font-style="normal" text-anchor="start" >Top Plate</text>
<text x="107" y="1112.6" font-size="16.70" fill="#333" font-weight="normal" font-style="normal" text-anchor="start" >Tube 1&quot;x1&quot;x5&quot;</text>
<text x="107" y="1145.1" font-size="16.70" fill="#333" font-weight="normal" font-style="normal" text-anchor="start" >Motor Spacer Block</text>
<text x="107" y="1177.6" font-size="16.70" fill="#333" font-weight="normal" font-style="normal" text-anchor="start" >50T 5M 9mm Wide Belt</text>
<text x="107" y="1210.1" font-size="16.70" fill="#333" font-weight="normal" font-style="normal" text-anchor="start" >60T 5M 9mm Wide Belt</text>
<text x="107" y="1242.6" font-size="16.70" fill="#333" font-weight="normal" font-style="normal" text-anchor="start" >60T 5M 9mm Wide Belt</text>
<text x="430.7" y="124.5" font-size="15.86" fill="#2a2a2a" font-weight="bold" font-style="normal" text-anchor="start" textLength="176" lengthAdjust="spacingAndGlyphs" >Tube Assembly mirror 1</text>
<text x="452.9" y="157.8" font-size="15.14" fill="#1a54c0" font-weight="bold" font-style="normal" text-anchor="start" textLength="75" lengthAdjust="spacingAndGlyphs" >Part center</text>
<text x="588.1" y="157.8" font-size="15.14" fill="#555" font-weight="normal" font-style="normal" text-anchor="start" textLength="79.2" lengthAdjust="spacingAndGlyphs" >World origin</text>
<text x="434" y="196.9" font-size="13.29" fill="#555" font-weight="normal" font-style="normal" text-anchor="start" textLength="84.7" lengthAdjust="spacingAndGlyphs" >Entity to mirror</text>
<text x="435.2" y="220.9" font-size="16.71" fill="#555" font-weight="normal" font-style="normal" text-anchor="start" textLength="101.6" lengthAdjust="spacingAndGlyphs" >Tube 1&quot;x1&quot;x5&quot;</text>
<text x="433.9" y="258.2" font-size="13.86" fill="#555" font-weight="normal" font-style="normal" text-anchor="start" textLength="68.2" lengthAdjust="spacingAndGlyphs" >Mirror plane</text>
<text x="435.2" y="281.9" font-size="16.43" fill="#555" font-weight="normal" font-style="normal" text-anchor="start" textLength="82.1" lengthAdjust="spacingAndGlyphs" >Right plane</text>
<text x="429.6" y="322.7" font-size="15.86" fill="#555" font-weight="normal" font-style="normal" text-anchor="start" textLength="68.6" lengthAdjust="spacingAndGlyphs" >Transform</text>
<text x="513.3" y="321.2" font-size="16.43" fill="#333" font-weight="normal" font-style="normal" text-anchor="start" textLength="47.6" lengthAdjust="spacingAndGlyphs" >Linear</text>
<text x="448.2" y="356.1" font-size="17.14" fill="#555" font-weight="normal" font-style="normal" text-anchor="start" textLength="195.2" lengthAdjust="spacingAndGlyphs" >Custom coordinate system</text>
<text x="448.2" y="389.8" font-size="17.14" fill="#555" font-weight="normal" font-style="normal" text-anchor="start" textLength="164.3" lengthAdjust="spacingAndGlyphs" >Show transform result</text>
<text x="448.2" y="424.7" font-size="17.14" fill="#555" font-weight="normal" font-style="normal" text-anchor="start" textLength="118.3" lengthAdjust="spacingAndGlyphs" >Verify transform</text>
</svg>
<div class="a" id="frameTop"></div><div class="a" id="frameR"></div><div class="a" id="frameB"></div>
<svg style="left:2386px;top:1282px" width="12" height="12" viewBox="0 0 12 12"><path d="M12 0 L12 12 L0 12 L0 11 C6 11 11 6 11 0 Z" fill="#1e1e1e"/></svg>
</body></html>
